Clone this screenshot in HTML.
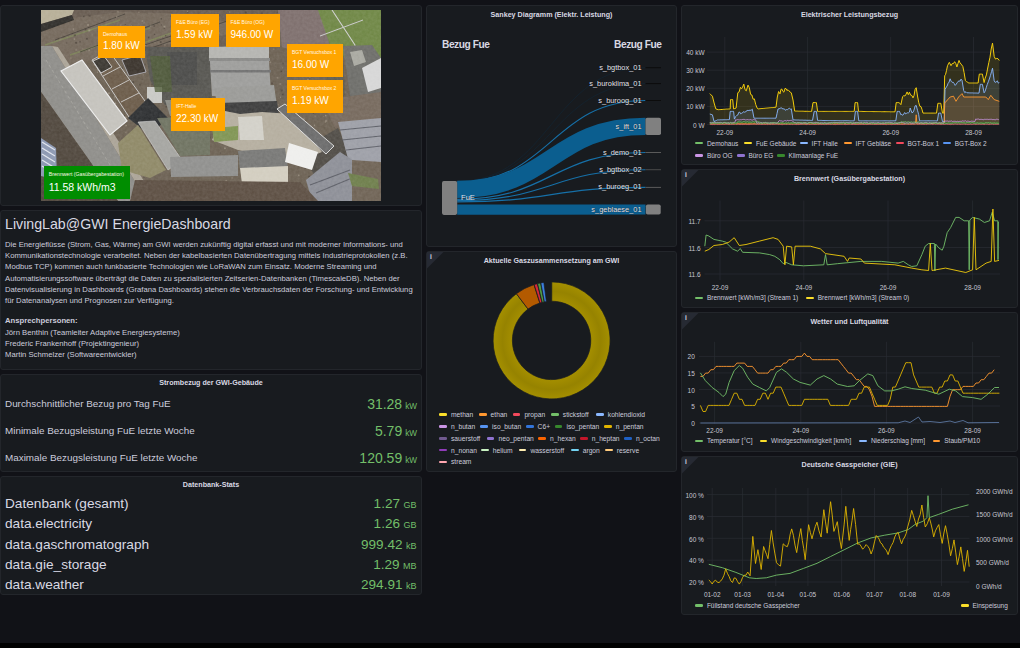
<!DOCTYPE html>
<html><head><meta charset="utf-8">
<style>
*{box-sizing:border-box;margin:0;padding:0}
html,body{width:1020px;height:648px;overflow:hidden;background:#111217;font-family:"Liberation Sans",sans-serif;color:#ccccdc}
.p{position:absolute;background:#181b1f;border:1px solid #23262b;border-radius:3px;overflow:hidden}
.t{position:absolute;white-space:nowrap}
.ttl{position:absolute;text-align:center;font-size:7.15px;line-height:8px;font-weight:bold;color:#d8d9e3;white-space:nowrap}
.ob{position:absolute;background:#ffa500;color:#fff;overflow:hidden}
.ol{position:absolute;left:5px;top:6px;font-size:5px;line-height:5px;white-space:nowrap;color:#fff8e8}
.ov{position:absolute;left:5px;top:14.5px;font-size:10px;line-height:12px;white-space:nowrap}
.sl{font-size:9.9px;line-height:12px;color:#ccccdc}
.sv{font-size:14px;line-height:16px;color:#73bf69}
.su{font-size:8.2px;margin-left:3px}
.dl{font-size:13.65px;line-height:15px;color:#d8d9e3}
.dv{font-size:13.55px;line-height:15px;color:#73bf69}
.du{font-size:9px;margin-left:3.5px}
#bar{position:absolute;left:0;top:643px;width:1020px;height:5px;background:#000}
</style><style>
.sk{font-size:7.4px;line-height:8px;color:#e6e6ee;text-shadow:0 0 1px #000}
.lg{font-size:6.7px;line-height:9px;color:#ccccdc;padding-left:11.8px}
.lg i,.lg2 i{position:absolute;left:0;top:3.2px;width:7.8px;height:2.6px;border-radius:1.3px}
.lg2{font-size:6.5px;line-height:9px;color:#ccccdc;padding-left:11.6px}
.ax{font-size:6.5px;line-height:8px;color:#c7c7d1;margin-top:1px}
</style></head><body>
<!-- left column -->
<div class="p" id="pA" style="left:0;top:5px;width:422px;height:201px"></div>
<div class="p" id="pB" style="left:0;top:210px;width:422px;height:160px"></div>
<div class="p" id="pC" style="left:0;top:374px;width:422px;height:98px"></div>
<div class="p" id="pD" style="left:0;top:476px;width:422px;height:119px"></div>
<!-- middle -->
<div class="p" id="pS" style="left:426px;top:5px;width:251px;height:242px"></div>
<div class="p" id="pP" style="left:426px;top:251px;width:251px;height:221px"></div>
<!-- right -->
<div class="p" id="pE" style="left:681px;top:5px;width:337px;height:160px"></div>
<div class="p" id="pW1" style="left:681px;top:169px;width:337px;height:139px"></div>
<div class="p" id="pW2" style="left:681px;top:312px;width:337px;height:140px"></div>
<div class="p" id="pG" style="left:681px;top:456px;width:337px;height:159px"></div>

<svg style="position:absolute;left:41px;top:10px" width="340" height="191" viewBox="41 10 340 191">
<defs>
<filter id="nz" x="0" y="0" width="100%" height="100%">
<feTurbulence type="fractalNoise" baseFrequency="0.35" numOctaves="2" seed="3" result="t"/>
<feColorMatrix in="t" type="matrix" values="0 0 0 0 0  0 0 0 0 0  0 0 0 0 0  0 0 0 -1.2 1.1" result="a"/>
<feComposite in="SourceGraphic" in2="a" operator="in"/>
</filter>
</defs>
<rect x="41" y="10" width="340" height="191" fill="#6b6052"/>
<!-- top tree band -->
<polygon points="41,10 282,10 275,47 210,47 148,47 120,56 88,60 41,82" fill="#675b50"/>
<polygon points="41,22 120,12 200,14 250,30 200,40 120,50 60,70 41,75" fill="#73675a"/>
<path d="M45,45 L120,20 M70,55 L150,28 M95,60 L180,30" fill="none" stroke="#7d8658" stroke-width="1.6" opacity="0.8"/>
<path d="M55,40 L125,14 M80,52 L160,22 M110,57 L200,26 M140,52 L230,20" fill="none" stroke="#3f3932" stroke-width="1" opacity="0.8"/>
<rect x="258.4" y="14.8" width="1.1" height="1.1" fill="#3a332c" opacity="0.55"/><rect x="88.4" y="29.6" width="1.9" height="1.9" fill="#b0a898" opacity="0.55"/><rect x="70.6" y="90.6" width="0.9" height="0.9" fill="#9a8e80" opacity="0.55"/><rect x="120.1" y="125.0" width="1.0" height="1.0" fill="#8a7e70" opacity="0.55"/><rect x="262.0" y="114.1" width="1.3" height="1.3" fill="#a89c8c" opacity="0.55"/><rect x="135.6" y="176.0" width="1.6" height="1.6" fill="#a89c8c" opacity="0.55"/><rect x="156.7" y="39.7" width="0.9" height="0.9" fill="#3a332c" opacity="0.55"/><rect x="170.2" y="78.6" width="1.5" height="1.5" fill="#3a332c" opacity="0.55"/><rect x="315.4" y="149.4" width="0.9" height="0.9" fill="#8a7e70" opacity="0.55"/><rect x="354.6" y="25.1" width="1.8" height="1.8" fill="#3a332c" opacity="0.55"/><rect x="251.3" y="174.6" width="1.0" height="1.0" fill="#8a7e70" opacity="0.55"/><rect x="64.6" y="136.3" width="2.0" height="2.0" fill="#3a332c" opacity="0.55"/><rect x="331.8" y="175.5" width="1.1" height="1.1" fill="#4a4038" opacity="0.55"/><rect x="257.1" y="79.7" width="1.2" height="1.2" fill="#3a332c" opacity="0.55"/><rect x="268.9" y="144.0" width="1.6" height="1.6" fill="#b0a898" opacity="0.55"/><rect x="248.1" y="42.7" width="1.1" height="1.1" fill="#b0a898" opacity="0.55"/><rect x="198.2" y="61.6" width="1.6" height="1.6" fill="#b0a898" opacity="0.55"/><rect x="115.7" y="71.9" width="1.1" height="1.1" fill="#9a8e80" opacity="0.55"/><rect x="51.9" y="70.3" width="0.9" height="0.9" fill="#3a332c" opacity="0.55"/><rect x="351.5" y="118.3" width="1.2" height="1.2" fill="#b0a898" opacity="0.55"/><rect x="263.8" y="85.6" width="1.4" height="1.4" fill="#b0a898" opacity="0.55"/><rect x="131.1" y="57.1" width="1.4" height="1.4" fill="#8a7e70" opacity="0.55"/><rect x="295.0" y="91.8" width="1.3" height="1.3" fill="#8a7e70" opacity="0.55"/><rect x="115.6" y="200.5" width="1.4" height="1.4" fill="#8a7e70" opacity="0.55"/><rect x="298.0" y="174.5" width="1.6" height="1.6" fill="#a89c8c" opacity="0.55"/><rect x="310.3" y="90.6" width="1.3" height="1.3" fill="#9a8e80" opacity="0.55"/><rect x="243.6" y="99.4" width="2.0" height="2.0" fill="#3a332c" opacity="0.55"/><rect x="333.7" y="12.2" width="0.9" height="0.9" fill="#b0a898" opacity="0.55"/><rect x="341.8" y="153.4" width="1.2" height="1.2" fill="#b0a898" opacity="0.55"/><rect x="140.8" y="40.2" width="1.9" height="1.9" fill="#9a8e80" opacity="0.55"/><rect x="338.8" y="60.3" width="1.7" height="1.7" fill="#8a7e70" opacity="0.55"/><rect x="213.6" y="30.3" width="1.2" height="1.2" fill="#b0a898" opacity="0.55"/><rect x="258.2" y="126.3" width="1.2" height="1.2" fill="#a89c8c" opacity="0.55"/><rect x="95.9" y="192.1" width="1.9" height="1.9" fill="#8a7e70" opacity="0.55"/><rect x="244.6" y="103.3" width="1.9" height="1.9" fill="#9a8e80" opacity="0.55"/><rect x="339.8" y="168.8" width="1.1" height="1.1" fill="#3a332c" opacity="0.55"/><rect x="122.9" y="118.4" width="0.9" height="0.9" fill="#9a8e80" opacity="0.55"/><rect x="206.2" y="23.2" width="1.7" height="1.7" fill="#8a7e70" opacity="0.55"/><rect x="84.7" y="100.8" width="1.0" height="1.0" fill="#8a7e70" opacity="0.55"/><rect x="220.4" y="125.9" width="1.9" height="1.9" fill="#a89c8c" opacity="0.55"/><rect x="297.8" y="141.8" width="1.2" height="1.2" fill="#b0a898" opacity="0.55"/><rect x="379.4" y="134.1" width="1.9" height="1.9" fill="#4a4038" opacity="0.55"/><rect x="194.5" y="57.3" width="1.2" height="1.2" fill="#9a8e80" opacity="0.55"/><rect x="241.0" y="54.0" width="0.8" height="0.8" fill="#a89c8c" opacity="0.55"/><rect x="281.7" y="21.2" width="1.9" height="1.9" fill="#9a8e80" opacity="0.55"/><rect x="333.3" y="23.5" width="1.1" height="1.1" fill="#a89c8c" opacity="0.55"/><rect x="206.0" y="113.0" width="1.9" height="1.9" fill="#b0a898" opacity="0.55"/><rect x="235.2" y="100.3" width="1.8" height="1.8" fill="#4a4038" opacity="0.55"/><rect x="105.7" y="28.5" width="1.2" height="1.2" fill="#4a4038" opacity="0.55"/><rect x="180.8" y="175.0" width="1.6" height="1.6" fill="#9a8e80" opacity="0.55"/><rect x="375.6" y="28.8" width="1.7" height="1.7" fill="#4a4038" opacity="0.55"/><rect x="313.2" y="30.9" width="1.0" height="1.0" fill="#a89c8c" opacity="0.55"/><rect x="193.5" y="90.6" width="1.4" height="1.4" fill="#3a332c" opacity="0.55"/><rect x="338.3" y="24.4" width="0.9" height="0.9" fill="#8a7e70" opacity="0.55"/><rect x="262.7" y="113.3" width="2.0" height="2.0" fill="#9a8e80" opacity="0.55"/><rect x="356.0" y="172.1" width="1.3" height="1.3" fill="#a89c8c" opacity="0.55"/><rect x="204.7" y="175.1" width="1.0" height="1.0" fill="#9a8e80" opacity="0.55"/><rect x="41.7" y="84.6" width="1.1" height="1.1" fill="#4a4038" opacity="0.55"/><rect x="277.8" y="149.5" width="1.6" height="1.6" fill="#8a7e70" opacity="0.55"/><rect x="206.5" y="46.3" width="2.0" height="2.0" fill="#a89c8c" opacity="0.55"/><rect x="237.9" y="113.6" width="1.2" height="1.2" fill="#b0a898" opacity="0.55"/><rect x="58.0" y="101.1" width="1.0" height="1.0" fill="#8a7e70" opacity="0.55"/><rect x="367.7" y="25.3" width="0.9" height="0.9" fill="#a89c8c" opacity="0.55"/><rect x="64.1" y="174.6" width="0.9" height="0.9" fill="#4a4038" opacity="0.55"/><rect x="343.7" y="57.0" width="0.8" height="0.8" fill="#8a7e70" opacity="0.55"/><rect x="68.9" y="135.6" width="1.4" height="1.4" fill="#8a7e70" opacity="0.55"/><rect x="358.8" y="49.0" width="1.2" height="1.2" fill="#b0a898" opacity="0.55"/><rect x="131.3" y="35.0" width="1.2" height="1.2" fill="#b0a898" opacity="0.55"/><rect x="148.5" y="153.6" width="0.8" height="0.8" fill="#9a8e80" opacity="0.55"/><rect x="252.2" y="117.5" width="0.9" height="0.9" fill="#9a8e80" opacity="0.55"/><rect x="113.5" y="60.7" width="1.9" height="1.9" fill="#3a332c" opacity="0.55"/><rect x="340.0" y="80.6" width="1.3" height="1.3" fill="#a89c8c" opacity="0.55"/><rect x="225.7" y="67.8" width="1.4" height="1.4" fill="#b0a898" opacity="0.55"/><rect x="268.1" y="115.9" width="0.9" height="0.9" fill="#b0a898" opacity="0.55"/><rect x="339.6" y="60.5" width="1.7" height="1.7" fill="#9a8e80" opacity="0.55"/><rect x="93.9" y="63.8" width="1.7" height="1.7" fill="#a89c8c" opacity="0.55"/><rect x="110.2" y="131.1" width="1.4" height="1.4" fill="#3a332c" opacity="0.55"/><rect x="126.4" y="183.5" width="0.9" height="0.9" fill="#9a8e80" opacity="0.55"/><rect x="185.0" y="62.8" width="1.2" height="1.2" fill="#9a8e80" opacity="0.55"/><rect x="85.5" y="197.1" width="1.7" height="1.7" fill="#a89c8c" opacity="0.55"/><rect x="228.6" y="91.7" width="0.9" height="0.9" fill="#9a8e80" opacity="0.55"/><rect x="362.3" y="142.0" width="1.5" height="1.5" fill="#a89c8c" opacity="0.55"/><rect x="324.8" y="121.3" width="1.3" height="1.3" fill="#a89c8c" opacity="0.55"/><rect x="55.2" y="79.6" width="1.9" height="1.9" fill="#9a8e80" opacity="0.55"/><rect x="112.4" y="57.7" width="1.2" height="1.2" fill="#9a8e80" opacity="0.55"/><rect x="231.4" y="177.1" width="1.7" height="1.7" fill="#8a7e70" opacity="0.55"/><rect x="355.8" y="55.2" width="2.0" height="2.0" fill="#a89c8c" opacity="0.55"/><rect x="316.7" y="178.4" width="1.0" height="1.0" fill="#9a8e80" opacity="0.55"/><rect x="355.3" y="159.4" width="1.8" height="1.8" fill="#4a4038" opacity="0.55"/><rect x="334.8" y="164.9" width="1.0" height="1.0" fill="#3a332c" opacity="0.55"/><rect x="279.4" y="83.1" width="1.8" height="1.8" fill="#9a8e80" opacity="0.55"/><rect x="116.6" y="166.0" width="1.2" height="1.2" fill="#4a4038" opacity="0.55"/><rect x="320.0" y="176.4" width="0.8" height="0.8" fill="#a89c8c" opacity="0.55"/><rect x="106.7" y="72.7" width="2.0" height="2.0" fill="#9a8e80" opacity="0.55"/><rect x="135.9" y="132.5" width="1.6" height="1.6" fill="#4a4038" opacity="0.55"/><rect x="327.8" y="73.2" width="0.9" height="0.9" fill="#9a8e80" opacity="0.55"/><rect x="370.9" y="44.1" width="0.8" height="0.8" fill="#3a332c" opacity="0.55"/><rect x="243.8" y="76.0" width="1.3" height="1.3" fill="#3a332c" opacity="0.55"/><rect x="375.6" y="32.1" width="1.0" height="1.0" fill="#8a7e70" opacity="0.55"/><rect x="56.1" y="93.3" width="1.9" height="1.9" fill="#8a7e70" opacity="0.55"/><rect x="224.1" y="147.4" width="1.7" height="1.7" fill="#b0a898" opacity="0.55"/><rect x="108.0" y="92.4" width="1.9" height="1.9" fill="#b0a898" opacity="0.55"/><rect x="252.9" y="136.7" width="1.7" height="1.7" fill="#9a8e80" opacity="0.55"/><rect x="143.1" y="69.1" width="1.2" height="1.2" fill="#4a4038" opacity="0.55"/><rect x="278.1" y="115.9" width="1.3" height="1.3" fill="#a89c8c" opacity="0.55"/><rect x="360.7" y="139.4" width="1.5" height="1.5" fill="#a89c8c" opacity="0.55"/><rect x="143.3" y="114.7" width="1.2" height="1.2" fill="#9a8e80" opacity="0.55"/><rect x="112.5" y="160.1" width="1.6" height="1.6" fill="#8a7e70" opacity="0.55"/><rect x="199.1" y="94.5" width="1.4" height="1.4" fill="#a89c8c" opacity="0.55"/><rect x="310.9" y="193.3" width="1.0" height="1.0" fill="#b0a898" opacity="0.55"/><rect x="69.8" y="108.5" width="1.5" height="1.5" fill="#b0a898" opacity="0.55"/><rect x="72.8" y="191.8" width="1.6" height="1.6" fill="#a89c8c" opacity="0.55"/><rect x="117.4" y="48.0" width="0.9" height="0.9" fill="#9a8e80" opacity="0.55"/><rect x="375.5" y="126.8" width="1.3" height="1.3" fill="#9a8e80" opacity="0.55"/><rect x="342.3" y="120.0" width="1.6" height="1.6" fill="#b0a898" opacity="0.55"/><rect x="209.1" y="56.6" width="1.6" height="1.6" fill="#b0a898" opacity="0.55"/><rect x="344.5" y="174.3" width="1.7" height="1.7" fill="#9a8e80" opacity="0.55"/><rect x="115.4" y="163.6" width="1.4" height="1.4" fill="#b0a898" opacity="0.55"/><rect x="58.1" y="57.6" width="1.3" height="1.3" fill="#9a8e80" opacity="0.55"/><rect x="313.5" y="137.5" width="1.5" height="1.5" fill="#8a7e70" opacity="0.55"/><rect x="364.0" y="180.3" width="1.8" height="1.8" fill="#8a7e70" opacity="0.55"/><rect x="344.3" y="91.5" width="1.3" height="1.3" fill="#8a7e70" opacity="0.55"/><rect x="95.1" y="174.5" width="1.1" height="1.1" fill="#4a4038" opacity="0.55"/><rect x="125.1" y="131.8" width="1.4" height="1.4" fill="#8a7e70" opacity="0.55"/><rect x="122.3" y="94.0" width="1.1" height="1.1" fill="#b0a898" opacity="0.55"/><rect x="133.4" y="71.1" width="0.9" height="0.9" fill="#8a7e70" opacity="0.55"/><rect x="92.3" y="83.2" width="1.6" height="1.6" fill="#a89c8c" opacity="0.55"/><rect x="62.8" y="87.9" width="1.4" height="1.4" fill="#8a7e70" opacity="0.55"/><rect x="62.2" y="169.1" width="1.9" height="1.9" fill="#4a4038" opacity="0.55"/><rect x="239.6" y="142.8" width="1.3" height="1.3" fill="#8a7e70" opacity="0.55"/><rect x="43.0" y="77.2" width="1.8" height="1.8" fill="#4a4038" opacity="0.55"/><rect x="365.2" y="90.0" width="1.7" height="1.7" fill="#b0a898" opacity="0.55"/><rect x="313.0" y="181.5" width="1.1" height="1.1" fill="#4a4038" opacity="0.55"/><rect x="189.2" y="15.5" width="1.6" height="1.6" fill="#3a332c" opacity="0.55"/><rect x="312.4" y="148.3" width="1.9" height="1.9" fill="#4a4038" opacity="0.55"/><rect x="374.4" y="112.0" width="1.5" height="1.5" fill="#4a4038" opacity="0.55"/><rect x="266.4" y="26.0" width="1.0" height="1.0" fill="#4a4038" opacity="0.55"/><rect x="198.0" y="19.6" width="1.2" height="1.2" fill="#4a4038" opacity="0.55"/><rect x="195.6" y="74.5" width="1.1" height="1.1" fill="#4a4038" opacity="0.55"/><rect x="364.4" y="90.5" width="1.4" height="1.4" fill="#9a8e80" opacity="0.55"/><rect x="295.7" y="19.9" width="1.1" height="1.1" fill="#3a332c" opacity="0.55"/><rect x="64.3" y="192.8" width="1.7" height="1.7" fill="#9a8e80" opacity="0.55"/><rect x="363.9" y="48.1" width="1.5" height="1.5" fill="#9a8e80" opacity="0.55"/><rect x="122.1" y="100.5" width="1.5" height="1.5" fill="#9a8e80" opacity="0.55"/><rect x="115.1" y="143.6" width="1.0" height="1.0" fill="#3a332c" opacity="0.55"/><rect x="247.5" y="152.9" width="1.7" height="1.7" fill="#9a8e80" opacity="0.55"/><rect x="96.7" y="69.4" width="0.8" height="0.8" fill="#8a7e70" opacity="0.55"/><rect x="147.1" y="139.4" width="1.3" height="1.3" fill="#4a4038" opacity="0.55"/><rect x="284.1" y="24.5" width="1.8" height="1.8" fill="#b0a898" opacity="0.55"/><rect x="123.6" y="143.2" width="1.8" height="1.8" fill="#3a332c" opacity="0.55"/><rect x="245.1" y="33.1" width="1.7" height="1.7" fill="#8a7e70" opacity="0.55"/><rect x="159.0" y="91.8" width="0.9" height="0.9" fill="#3a332c" opacity="0.55"/><rect x="261.2" y="12.4" width="1.8" height="1.8" fill="#4a4038" opacity="0.55"/><rect x="76.9" y="193.5" width="1.9" height="1.9" fill="#b0a898" opacity="0.55"/><rect x="197.3" y="39.2" width="1.7" height="1.7" fill="#a89c8c" opacity="0.55"/><rect x="369.3" y="61.6" width="1.7" height="1.7" fill="#8a7e70" opacity="0.55"/><rect x="199.1" y="167.7" width="1.1" height="1.1" fill="#8a7e70" opacity="0.55"/><rect x="330.6" y="168.7" width="1.1" height="1.1" fill="#9a8e80" opacity="0.55"/><rect x="194.3" y="153.3" width="1.5" height="1.5" fill="#8a7e70" opacity="0.55"/><rect x="169.9" y="15.5" width="1.0" height="1.0" fill="#3a332c" opacity="0.55"/><rect x="113.1" y="162.4" width="1.1" height="1.1" fill="#3a332c" opacity="0.55"/><rect x="243.7" y="178.1" width="0.8" height="0.8" fill="#8a7e70" opacity="0.55"/><rect x="363.3" y="26.4" width="1.3" height="1.3" fill="#b0a898" opacity="0.55"/><rect x="229.8" y="55.9" width="1.6" height="1.6" fill="#4a4038" opacity="0.55"/><rect x="207.9" y="161.5" width="1.2" height="1.2" fill="#9a8e80" opacity="0.55"/><rect x="178.5" y="56.5" width="1.5" height="1.5" fill="#b0a898" opacity="0.55"/><rect x="201.9" y="111.4" width="2.0" height="2.0" fill="#4a4038" opacity="0.55"/><rect x="228.1" y="77.2" width="1.1" height="1.1" fill="#4a4038" opacity="0.55"/><rect x="126.5" y="33.0" width="1.2" height="1.2" fill="#a89c8c" opacity="0.55"/><rect x="293.6" y="191.6" width="1.0" height="1.0" fill="#b0a898" opacity="0.55"/><rect x="114.6" y="102.5" width="1.5" height="1.5" fill="#b0a898" opacity="0.55"/><rect x="299.5" y="124.0" width="1.8" height="1.8" fill="#9a8e80" opacity="0.55"/><rect x="141.7" y="78.9" width="0.8" height="0.8" fill="#3a332c" opacity="0.55"/><rect x="222.6" y="62.4" width="1.5" height="1.5" fill="#9a8e80" opacity="0.55"/><rect x="278.1" y="34.1" width="0.9" height="0.9" fill="#4a4038" opacity="0.55"/><rect x="45.2" y="64.3" width="1.3" height="1.3" fill="#4a4038" opacity="0.55"/><rect x="103.7" y="19.8" width="0.9" height="0.9" fill="#4a4038" opacity="0.55"/><rect x="63.2" y="103.9" width="1.6" height="1.6" fill="#8a7e70" opacity="0.55"/><rect x="59.2" y="38.5" width="1.9" height="1.9" fill="#8a7e70" opacity="0.55"/><rect x="70.0" y="57.4" width="1.7" height="1.7" fill="#8a7e70" opacity="0.55"/><rect x="247.1" y="161.0" width="1.7" height="1.7" fill="#a89c8c" opacity="0.55"/><rect x="170.3" y="183.5" width="1.8" height="1.8" fill="#3a332c" opacity="0.55"/><rect x="377.6" y="68.3" width="0.9" height="0.9" fill="#8a7e70" opacity="0.55"/><rect x="367.4" y="29.0" width="1.6" height="1.6" fill="#a89c8c" opacity="0.55"/><rect x="131.0" y="25.5" width="1.0" height="1.0" fill="#a89c8c" opacity="0.55"/><rect x="66.5" y="10.5" width="1.6" height="1.6" fill="#4a4038" opacity="0.55"/><rect x="200.8" y="16.2" width="1.6" height="1.6" fill="#3a332c" opacity="0.55"/><rect x="280.0" y="96.7" width="1.1" height="1.1" fill="#b0a898" opacity="0.55"/><rect x="130.9" y="161.1" width="1.6" height="1.6" fill="#8a7e70" opacity="0.55"/><rect x="358.4" y="91.2" width="1.1" height="1.1" fill="#8a7e70" opacity="0.55"/><rect x="91.7" y="60.7" width="0.9" height="0.9" fill="#a89c8c" opacity="0.55"/><rect x="97.4" y="68.8" width="1.8" height="1.8" fill="#b0a898" opacity="0.55"/><rect x="354.2" y="93.9" width="1.6" height="1.6" fill="#4a4038" opacity="0.55"/><rect x="278.9" y="190.1" width="1.4" height="1.4" fill="#8a7e70" opacity="0.55"/><rect x="189.8" y="124.2" width="1.7" height="1.7" fill="#4a4038" opacity="0.55"/><rect x="246.3" y="14.9" width="2.0" height="2.0" fill="#a89c8c" opacity="0.55"/><rect x="325.2" y="119.9" width="2.0" height="2.0" fill="#9a8e80" opacity="0.55"/><rect x="269.6" y="61.5" width="1.7" height="1.7" fill="#9a8e80" opacity="0.55"/><rect x="100.6" y="109.1" width="1.9" height="1.9" fill="#4a4038" opacity="0.55"/><rect x="102.7" y="121.8" width="1.8" height="1.8" fill="#b0a898" opacity="0.55"/><rect x="370.5" y="99.8" width="1.2" height="1.2" fill="#4a4038" opacity="0.55"/><rect x="268.8" y="173.8" width="1.3" height="1.3" fill="#3a332c" opacity="0.55"/><rect x="209.5" y="136.6" width="1.8" height="1.8" fill="#4a4038" opacity="0.55"/><rect x="228.0" y="96.9" width="1.1" height="1.1" fill="#3a332c" opacity="0.55"/><rect x="80.4" y="157.6" width="1.8" height="1.8" fill="#8a7e70" opacity="0.55"/><rect x="41.4" y="176.0" width="1.3" height="1.3" fill="#4a4038" opacity="0.55"/><rect x="104.8" y="79.1" width="1.6" height="1.6" fill="#4a4038" opacity="0.55"/><rect x="299.4" y="48.9" width="1.0" height="1.0" fill="#8a7e70" opacity="0.55"/><rect x="138.9" y="178.2" width="0.9" height="0.9" fill="#4a4038" opacity="0.55"/><rect x="371.9" y="126.3" width="1.7" height="1.7" fill="#a89c8c" opacity="0.55"/><rect x="146.7" y="12.6" width="0.9" height="0.9" fill="#4a4038" opacity="0.55"/><rect x="378.4" y="184.4" width="1.9" height="1.9" fill="#4a4038" opacity="0.55"/><rect x="261.2" y="39.4" width="1.2" height="1.2" fill="#b0a898" opacity="0.55"/><rect x="280.8" y="89.4" width="2.0" height="2.0" fill="#4a4038" opacity="0.55"/><rect x="123.9" y="115.3" width="1.0" height="1.0" fill="#4a4038" opacity="0.55"/><rect x="244.8" y="152.5" width="1.8" height="1.8" fill="#a89c8c" opacity="0.55"/><rect x="134.9" y="160.9" width="1.2" height="1.2" fill="#4a4038" opacity="0.55"/><rect x="308.8" y="61.0" width="1.1" height="1.1" fill="#9a8e80" opacity="0.55"/><rect x="142.5" y="122.1" width="1.4" height="1.4" fill="#b0a898" opacity="0.55"/><rect x="91.5" y="112.9" width="1.2" height="1.2" fill="#3a332c" opacity="0.55"/><rect x="300.4" y="82.0" width="1.8" height="1.8" fill="#3a332c" opacity="0.55"/><rect x="374.5" y="55.6" width="1.1" height="1.1" fill="#4a4038" opacity="0.55"/><rect x="304.7" y="18.3" width="1.4" height="1.4" fill="#b0a898" opacity="0.55"/><rect x="351.6" y="82.8" width="1.8" height="1.8" fill="#b0a898" opacity="0.55"/><rect x="262.7" y="39.1" width="1.0" height="1.0" fill="#9a8e80" opacity="0.55"/><rect x="369.2" y="73.4" width="1.8" height="1.8" fill="#9a8e80" opacity="0.55"/><rect x="190.7" y="110.5" width="0.8" height="0.8" fill="#4a4038" opacity="0.55"/><rect x="90.0" y="176.3" width="0.9" height="0.9" fill="#a89c8c" opacity="0.55"/><rect x="306.7" y="60.6" width="1.6" height="1.6" fill="#8a7e70" opacity="0.55"/><rect x="261.9" y="172.7" width="1.8" height="1.8" fill="#b0a898" opacity="0.55"/><rect x="170.2" y="70.5" width="1.9" height="1.9" fill="#b0a898" opacity="0.55"/><rect x="206.9" y="113.3" width="0.9" height="0.9" fill="#8a7e70" opacity="0.55"/><rect x="255.6" y="185.9" width="1.7" height="1.7" fill="#a89c8c" opacity="0.55"/><rect x="188.6" y="28.8" width="1.6" height="1.6" fill="#b0a898" opacity="0.55"/><rect x="75.2" y="41.8" width="1.9" height="1.9" fill="#3a332c" opacity="0.55"/><rect x="56.6" y="162.1" width="1.2" height="1.2" fill="#3a332c" opacity="0.55"/><rect x="187.4" y="56.6" width="1.5" height="1.5" fill="#4a4038" opacity="0.55"/><rect x="310.5" y="42.5" width="1.5" height="1.5" fill="#9a8e80" opacity="0.55"/><rect x="171.1" y="140.5" width="1.9" height="1.9" fill="#4a4038" opacity="0.55"/><rect x="89.7" y="98.1" width="1.4" height="1.4" fill="#3a332c" opacity="0.55"/><rect x="267.7" y="181.7" width="1.9" height="1.9" fill="#4a4038" opacity="0.55"/><rect x="271.4" y="40.2" width="1.9" height="1.9" fill="#4a4038" opacity="0.55"/><rect x="376.8" y="67.1" width="1.6" height="1.6" fill="#4a4038" opacity="0.55"/><rect x="196.3" y="67.7" width="1.8" height="1.8" fill="#4a4038" opacity="0.55"/><rect x="77.3" y="82.8" width="1.5" height="1.5" fill="#3a332c" opacity="0.55"/><rect x="378.5" y="66.4" width="1.3" height="1.3" fill="#b0a898" opacity="0.55"/><rect x="43.8" y="175.2" width="2.0" height="2.0" fill="#b0a898" opacity="0.55"/><rect x="350.6" y="152.3" width="1.7" height="1.7" fill="#3a332c" opacity="0.55"/><rect x="119.2" y="163.2" width="1.6" height="1.6" fill="#a89c8c" opacity="0.55"/><rect x="252.1" y="139.5" width="1.7" height="1.7" fill="#b0a898" opacity="0.55"/><rect x="272.5" y="36.1" width="1.9" height="1.9" fill="#9a8e80" opacity="0.55"/><rect x="260.8" y="69.0" width="0.8" height="0.8" fill="#4a4038" opacity="0.55"/><rect x="165.1" y="35.1" width="1.2" height="1.2" fill="#3a332c" opacity="0.55"/><rect x="182.3" y="48.4" width="1.9" height="1.9" fill="#8a7e70" opacity="0.55"/><rect x="165.4" y="105.8" width="1.8" height="1.8" fill="#3a332c" opacity="0.55"/><rect x="128.4" y="167.5" width="2.0" height="2.0" fill="#4a4038" opacity="0.55"/><rect x="141.3" y="176.2" width="1.4" height="1.4" fill="#9a8e80" opacity="0.55"/><rect x="66.6" y="154.0" width="1.8" height="1.8" fill="#a89c8c" opacity="0.55"/><rect x="287.2" y="197.2" width="1.2" height="1.2" fill="#8a7e70" opacity="0.55"/><rect x="309.8" y="12.7" width="0.9" height="0.9" fill="#8a7e70" opacity="0.55"/><rect x="166.3" y="153.1" width="1.5" height="1.5" fill="#3a332c" opacity="0.55"/><rect x="320.6" y="189.6" width="1.6" height="1.6" fill="#9a8e80" opacity="0.55"/><rect x="201.3" y="128.3" width="1.2" height="1.2" fill="#8a7e70" opacity="0.55"/><rect x="248.4" y="133.7" width="1.8" height="1.8" fill="#b0a898" opacity="0.55"/><rect x="350.2" y="67.7" width="0.9" height="0.9" fill="#4a4038" opacity="0.55"/><rect x="56.4" y="17.1" width="0.9" height="0.9" fill="#4a4038" opacity="0.55"/><rect x="120.8" y="112.7" width="1.3" height="1.3" fill="#4a4038" opacity="0.55"/><rect x="269.0" y="151.9" width="1.3" height="1.3" fill="#8a7e70" opacity="0.55"/><rect x="293.4" y="39.5" width="1.6" height="1.6" fill="#4a4038" opacity="0.55"/><rect x="324.5" y="127.6" width="0.8" height="0.8" fill="#3a332c" opacity="0.55"/><rect x="167.0" y="94.7" width="1.8" height="1.8" fill="#a89c8c" opacity="0.55"/><rect x="74.8" y="141.0" width="1.9" height="1.9" fill="#8a7e70" opacity="0.55"/><rect x="260.2" y="21.6" width="1.0" height="1.0" fill="#3a332c" opacity="0.55"/><rect x="82.5" y="172.0" width="0.9" height="0.9" fill="#4a4038" opacity="0.55"/><rect x="113.1" y="132.1" width="0.9" height="0.9" fill="#9a8e80" opacity="0.55"/><rect x="154.4" y="198.9" width="1.0" height="1.0" fill="#8a7e70" opacity="0.55"/><rect x="323.1" y="115.9" width="1.1" height="1.1" fill="#8a7e70" opacity="0.55"/><rect x="336.7" y="72.8" width="1.7" height="1.7" fill="#a89c8c" opacity="0.55"/><rect x="243.6" y="63.0" width="2.0" height="2.0" fill="#a89c8c" opacity="0.55"/><rect x="224.7" y="162.5" width="1.6" height="1.6" fill="#9a8e80" opacity="0.55"/><rect x="49.8" y="12.8" width="1.5" height="1.5" fill="#a89c8c" opacity="0.55"/><rect x="46.4" y="60.7" width="1.7" height="1.7" fill="#a89c8c" opacity="0.55"/><rect x="219.9" y="152.4" width="1.3" height="1.3" fill="#4a4038" opacity="0.55"/><rect x="164.1" y="123.4" width="1.4" height="1.4" fill="#4a4038" opacity="0.55"/><rect x="362.4" y="18.3" width="1.4" height="1.4" fill="#b0a898" opacity="0.55"/><rect x="196.7" y="194.1" width="2.0" height="2.0" fill="#9a8e80" opacity="0.55"/><rect x="329.1" y="91.4" width="1.4" height="1.4" fill="#9a8e80" opacity="0.55"/><rect x="350.3" y="24.0" width="1.2" height="1.2" fill="#9a8e80" opacity="0.55"/><rect x="91.4" y="34.1" width="1.6" height="1.6" fill="#8a7e70" opacity="0.55"/><rect x="227.4" y="72.1" width="1.4" height="1.4" fill="#8a7e70" opacity="0.55"/><rect x="195.3" y="125.6" width="1.8" height="1.8" fill="#9a8e80" opacity="0.55"/><rect x="79.9" y="135.1" width="1.7" height="1.7" fill="#8a7e70" opacity="0.55"/><rect x="114.1" y="96.2" width="1.3" height="1.3" fill="#a89c8c" opacity="0.55"/><rect x="322.3" y="86.2" width="0.9" height="0.9" fill="#b0a898" opacity="0.55"/><rect x="186.1" y="137.0" width="1.9" height="1.9" fill="#3a332c" opacity="0.55"/><rect x="274.5" y="100.6" width="1.8" height="1.8" fill="#9a8e80" opacity="0.55"/><rect x="72.7" y="28.4" width="1.2" height="1.2" fill="#b0a898" opacity="0.55"/><rect x="85.2" y="21.5" width="1.5" height="1.5" fill="#8a7e70" opacity="0.55"/><rect x="268.8" y="88.5" width="1.9" height="1.9" fill="#b0a898" opacity="0.55"/><rect x="184.8" y="184.9" width="2.0" height="2.0" fill="#9a8e80" opacity="0.55"/><rect x="245.1" y="77.2" width="1.4" height="1.4" fill="#8a7e70" opacity="0.55"/><rect x="93.6" y="102.1" width="1.2" height="1.2" fill="#9a8e80" opacity="0.55"/><rect x="230.1" y="31.9" width="1.5" height="1.5" fill="#3a332c" opacity="0.55"/><rect x="315.5" y="171.4" width="1.5" height="1.5" fill="#8a7e70" opacity="0.55"/><rect x="259.5" y="15.0" width="1.8" height="1.8" fill="#b0a898" opacity="0.55"/><rect x="131.9" y="44.5" width="1.7" height="1.7" fill="#b0a898" opacity="0.55"/><rect x="354.3" y="77.0" width="1.8" height="1.8" fill="#a89c8c" opacity="0.55"/><rect x="233.5" y="86.5" width="1.7" height="1.7" fill="#a89c8c" opacity="0.55"/><rect x="371.4" y="27.5" width="1.1" height="1.1" fill="#8a7e70" opacity="0.55"/><rect x="183.7" y="75.1" width="1.2" height="1.2" fill="#3a332c" opacity="0.55"/><rect x="151.3" y="189.8" width="0.9" height="0.9" fill="#8a7e70" opacity="0.55"/><rect x="58.9" y="40.1" width="0.9" height="0.9" fill="#8a7e70" opacity="0.55"/><rect x="68.7" y="94.6" width="1.4" height="1.4" fill="#4a4038" opacity="0.55"/><rect x="191.3" y="62.2" width="0.9" height="0.9" fill="#8a7e70" opacity="0.55"/><rect x="187.2" y="64.1" width="1.5" height="1.5" fill="#b0a898" opacity="0.55"/><rect x="220.2" y="68.9" width="1.3" height="1.3" fill="#a89c8c" opacity="0.55"/><rect x="244.8" y="11.5" width="1.9" height="1.9" fill="#3a332c" opacity="0.55"/><rect x="301.9" y="156.0" width="1.2" height="1.2" fill="#3a332c" opacity="0.55"/><rect x="43.6" y="152.7" width="1.0" height="1.0" fill="#a89c8c" opacity="0.55"/><rect x="222.1" y="54.0" width="1.8" height="1.8" fill="#8a7e70" opacity="0.55"/><rect x="315.1" y="23.8" width="0.9" height="0.9" fill="#b0a898" opacity="0.55"/><rect x="47.4" y="185.9" width="1.5" height="1.5" fill="#3a332c" opacity="0.55"/><rect x="236.0" y="145.5" width="1.1" height="1.1" fill="#4a4038" opacity="0.55"/><rect x="178.7" y="194.5" width="1.8" height="1.8" fill="#a89c8c" opacity="0.55"/><rect x="251.2" y="168.9" width="0.9" height="0.9" fill="#3a332c" opacity="0.55"/><rect x="328.1" y="56.5" width="1.3" height="1.3" fill="#8a7e70" opacity="0.55"/><rect x="67.7" y="176.3" width="1.2" height="1.2" fill="#b0a898" opacity="0.55"/><rect x="154.2" y="42.1" width="1.6" height="1.6" fill="#8a7e70" opacity="0.55"/><rect x="221.4" y="47.0" width="1.2" height="1.2" fill="#3a332c" opacity="0.55"/><rect x="366.8" y="133.3" width="1.1" height="1.1" fill="#a89c8c" opacity="0.55"/><rect x="90.8" y="47.7" width="1.0" height="1.0" fill="#8a7e70" opacity="0.55"/><rect x="299.1" y="24.4" width="1.4" height="1.4" fill="#b0a898" opacity="0.55"/><rect x="297.5" y="155.1" width="1.6" height="1.6" fill="#4a4038" opacity="0.55"/><rect x="340.9" y="132.8" width="1.2" height="1.2" fill="#8a7e70" opacity="0.55"/><rect x="371.1" y="70.4" width="0.9" height="0.9" fill="#4a4038" opacity="0.55"/><rect x="191.4" y="67.8" width="1.5" height="1.5" fill="#3a332c" opacity="0.55"/><rect x="160.7" y="24.2" width="1.3" height="1.3" fill="#4a4038" opacity="0.55"/><rect x="60.3" y="168.9" width="1.6" height="1.6" fill="#9a8e80" opacity="0.55"/><rect x="373.3" y="27.2" width="1.4" height="1.4" fill="#8a7e70" opacity="0.55"/><rect x="198.3" y="115.9" width="1.9" height="1.9" fill="#b0a898" opacity="0.55"/><rect x="193.9" y="164.7" width="1.0" height="1.0" fill="#b0a898" opacity="0.55"/><rect x="246.7" y="105.8" width="1.3" height="1.3" fill="#9a8e80" opacity="0.55"/><rect x="316.7" y="169.9" width="0.9" height="0.9" fill="#b0a898" opacity="0.55"/><rect x="260.7" y="17.5" width="1.3" height="1.3" fill="#b0a898" opacity="0.55"/><rect x="190.4" y="109.8" width="1.2" height="1.2" fill="#a89c8c" opacity="0.55"/><rect x="353.1" y="84.0" width="1.6" height="1.6" fill="#3a332c" opacity="0.55"/><rect x="58.8" y="130.5" width="0.9" height="0.9" fill="#3a332c" opacity="0.55"/><rect x="73.1" y="139.6" width="1.1" height="1.1" fill="#3a332c" opacity="0.55"/><rect x="330.5" y="194.2" width="1.8" height="1.8" fill="#8a7e70" opacity="0.55"/><rect x="154.3" y="121.3" width="1.9" height="1.9" fill="#a89c8c" opacity="0.55"/><rect x="146.5" y="135.3" width="1.3" height="1.3" fill="#b0a898" opacity="0.55"/><rect x="243.3" y="189.2" width="1.5" height="1.5" fill="#3a332c" opacity="0.55"/><rect x="259.8" y="72.7" width="1.6" height="1.6" fill="#a89c8c" opacity="0.55"/><rect x="322.8" y="151.1" width="1.9" height="1.9" fill="#b0a898" opacity="0.55"/><rect x="72.8" y="138.1" width="1.2" height="1.2" fill="#8a7e70" opacity="0.55"/><rect x="164.3" y="44.4" width="1.2" height="1.2" fill="#a89c8c" opacity="0.55"/><rect x="301.5" y="46.7" width="1.0" height="1.0" fill="#a89c8c" opacity="0.55"/><rect x="141.6" y="160.5" width="1.7" height="1.7" fill="#8a7e70" opacity="0.55"/><rect x="324.9" y="178.8" width="1.6" height="1.6" fill="#9a8e80" opacity="0.55"/><rect x="339.0" y="128.0" width="1.3" height="1.3" fill="#8a7e70" opacity="0.55"/><rect x="96.2" y="168.8" width="1.8" height="1.8" fill="#8a7e70" opacity="0.55"/><rect x="97.3" y="93.6" width="1.2" height="1.2" fill="#4a4038" opacity="0.55"/><rect x="285.7" y="195.2" width="1.1" height="1.1" fill="#8a7e70" opacity="0.55"/><rect x="295.5" y="95.7" width="1.1" height="1.1" fill="#8a7e70" opacity="0.55"/><rect x="369.3" y="159.8" width="1.2" height="1.2" fill="#a89c8c" opacity="0.55"/><rect x="363.0" y="198.0" width="1.7" height="1.7" fill="#4a4038" opacity="0.55"/><rect x="305.6" y="106.1" width="2.0" height="2.0" fill="#4a4038" opacity="0.55"/><rect x="318.7" y="163.0" width="1.8" height="1.8" fill="#a89c8c" opacity="0.55"/><rect x="58.7" y="101.8" width="1.5" height="1.5" fill="#3a332c" opacity="0.55"/><rect x="75.9" y="171.6" width="1.1" height="1.1" fill="#9a8e80" opacity="0.55"/><rect x="300.5" y="62.1" width="1.0" height="1.0" fill="#8a7e70" opacity="0.55"/><rect x="189.7" y="190.8" width="1.8" height="1.8" fill="#a89c8c" opacity="0.55"/><rect x="341.8" y="187.7" width="0.9" height="0.9" fill="#4a4038" opacity="0.55"/><rect x="211.7" y="55.0" width="1.2" height="1.2" fill="#9a8e80" opacity="0.55"/><rect x="50.6" y="187.8" width="1.6" height="1.6" fill="#b0a898" opacity="0.55"/><rect x="310.1" y="36.3" width="1.9" height="1.9" fill="#3a332c" opacity="0.55"/><rect x="201.6" y="168.7" width="1.4" height="1.4" fill="#b0a898" opacity="0.55"/><rect x="250.2" y="183.0" width="1.1" height="1.1" fill="#9a8e80" opacity="0.55"/><rect x="324.9" y="114.8" width="1.5" height="1.5" fill="#b0a898" opacity="0.55"/><rect x="184.9" y="158.2" width="1.2" height="1.2" fill="#a89c8c" opacity="0.55"/><rect x="57.2" y="90.2" width="1.3" height="1.3" fill="#8a7e70" opacity="0.55"/><rect x="78.7" y="182.9" width="1.4" height="1.4" fill="#8a7e70" opacity="0.55"/><rect x="255.9" y="119.8" width="1.0" height="1.0" fill="#b0a898" opacity="0.55"/><rect x="186.9" y="127.4" width="1.5" height="1.5" fill="#a89c8c" opacity="0.55"/><rect x="104.7" y="137.6" width="2.0" height="2.0" fill="#8a7e70" opacity="0.55"/><rect x="64.0" y="110.5" width="1.7" height="1.7" fill="#8a7e70" opacity="0.55"/><rect x="213.6" y="13.9" width="0.9" height="0.9" fill="#4a4038" opacity="0.55"/><rect x="172.5" y="81.3" width="0.8" height="0.8" fill="#b0a898" opacity="0.55"/><rect x="309.1" y="75.9" width="1.6" height="1.6" fill="#b0a898" opacity="0.55"/><rect x="76.2" y="121.1" width="1.0" height="1.0" fill="#3a332c" opacity="0.55"/><rect x="160.8" y="74.7" width="1.0" height="1.0" fill="#b0a898" opacity="0.55"/><rect x="305.9" y="98.7" width="1.4" height="1.4" fill="#b0a898" opacity="0.55"/><rect x="103.0" y="35.8" width="1.7" height="1.7" fill="#b0a898" opacity="0.55"/><rect x="196.6" y="66.0" width="1.7" height="1.7" fill="#9a8e80" opacity="0.55"/><rect x="342.2" y="70.3" width="1.4" height="1.4" fill="#3a332c" opacity="0.55"/><rect x="377.3" y="113.7" width="0.8" height="0.8" fill="#3a332c" opacity="0.55"/><rect x="260.9" y="64.6" width="1.8" height="1.8" fill="#9a8e80" opacity="0.55"/><rect x="153.9" y="33.8" width="1.3" height="1.3" fill="#3a332c" opacity="0.55"/><rect x="177.0" y="94.0" width="1.2" height="1.2" fill="#4a4038" opacity="0.55"/><rect x="104.5" y="142.2" width="1.9" height="1.9" fill="#3a332c" opacity="0.55"/><rect x="217.6" y="163.0" width="1.3" height="1.3" fill="#b0a898" opacity="0.55"/><rect x="187.4" y="200.1" width="1.5" height="1.5" fill="#a89c8c" opacity="0.55"/><rect x="150.2" y="25.3" width="1.2" height="1.2" fill="#b0a898" opacity="0.55"/><rect x="192.6" y="147.1" width="1.6" height="1.6" fill="#a89c8c" opacity="0.55"/><rect x="160.5" y="18.1" width="1.5" height="1.5" fill="#3a332c" opacity="0.55"/><rect x="188.9" y="132.1" width="0.9" height="0.9" fill="#9a8e80" opacity="0.55"/><rect x="257.8" y="79.4" width="1.6" height="1.6" fill="#b0a898" opacity="0.55"/><rect x="364.9" y="37.3" width="1.6" height="1.6" fill="#8a7e70" opacity="0.55"/><rect x="190.0" y="34.1" width="1.7" height="1.7" fill="#a89c8c" opacity="0.55"/><rect x="165.6" y="83.1" width="0.8" height="0.8" fill="#8a7e70" opacity="0.55"/><rect x="93.2" y="95.9" width="1.2" height="1.2" fill="#3a332c" opacity="0.55"/><rect x="300.4" y="119.6" width="1.2" height="1.2" fill="#8a7e70" opacity="0.55"/><rect x="147.9" y="63.2" width="0.8" height="0.8" fill="#9a8e80" opacity="0.55"/><rect x="104.3" y="108.9" width="0.9" height="0.9" fill="#8a7e70" opacity="0.55"/><rect x="304.5" y="144.5" width="2.0" height="2.0" fill="#a89c8c" opacity="0.55"/><rect x="138.1" y="185.0" width="1.0" height="1.0" fill="#4a4038" opacity="0.55"/><rect x="87.1" y="24.1" width="1.9" height="1.9" fill="#a89c8c" opacity="0.55"/><rect x="192.3" y="26.8" width="2.0" height="2.0" fill="#b0a898" opacity="0.55"/><rect x="376.4" y="137.6" width="0.9" height="0.9" fill="#b0a898" opacity="0.55"/><rect x="225.3" y="180.2" width="1.7" height="1.7" fill="#a89c8c" opacity="0.55"/><rect x="356.3" y="131.8" width="1.4" height="1.4" fill="#3a332c" opacity="0.55"/><rect x="82.3" y="48.4" width="1.1" height="1.1" fill="#a89c8c" opacity="0.55"/><rect x="209.0" y="78.9" width="1.2" height="1.2" fill="#8a7e70" opacity="0.55"/><rect x="314.2" y="115.4" width="1.9" height="1.9" fill="#8a7e70" opacity="0.55"/><rect x="63.4" y="86.0" width="1.7" height="1.7" fill="#b0a898" opacity="0.55"/><rect x="219.7" y="156.9" width="0.9" height="0.9" fill="#8a7e70" opacity="0.55"/><rect x="371.6" y="132.7" width="1.4" height="1.4" fill="#4a4038" opacity="0.55"/><rect x="216.9" y="34.5" width="1.6" height="1.6" fill="#8a7e70" opacity="0.55"/><rect x="102.9" y="194.6" width="1.4" height="1.4" fill="#4a4038" opacity="0.55"/><rect x="336.2" y="168.8" width="1.0" height="1.0" fill="#8a7e70" opacity="0.55"/><rect x="97.0" y="71.6" width="1.1" height="1.1" fill="#b0a898" opacity="0.55"/><rect x="363.1" y="109.1" width="1.8" height="1.8" fill="#3a332c" opacity="0.55"/><rect x="126.2" y="131.3" width="1.1" height="1.1" fill="#8a7e70" opacity="0.55"/><rect x="253.5" y="127.4" width="1.4" height="1.4" fill="#9a8e80" opacity="0.55"/><rect x="98.3" y="189.8" width="1.0" height="1.0" fill="#a89c8c" opacity="0.55"/><rect x="253.3" y="182.3" width="1.8" height="1.8" fill="#3a332c" opacity="0.55"/><rect x="232.6" y="167.6" width="0.9" height="0.9" fill="#9a8e80" opacity="0.55"/><rect x="363.5" y="157.3" width="1.6" height="1.6" fill="#3a332c" opacity="0.55"/><rect x="301.8" y="89.6" width="0.8" height="0.8" fill="#b0a898" opacity="0.55"/><rect x="343.3" y="114.2" width="1.9" height="1.9" fill="#b0a898" opacity="0.55"/><rect x="205.2" y="163.7" width="1.3" height="1.3" fill="#b0a898" opacity="0.55"/><rect x="195.2" y="141.5" width="1.3" height="1.3" fill="#a89c8c" opacity="0.55"/><rect x="205.6" y="49.0" width="1.0" height="1.0" fill="#8a7e70" opacity="0.55"/><rect x="333.9" y="71.0" width="2.0" height="2.0" fill="#3a332c" opacity="0.55"/><rect x="85.5" y="80.8" width="0.9" height="0.9" fill="#8a7e70" opacity="0.55"/><rect x="123.2" y="33.4" width="1.1" height="1.1" fill="#4a4038" opacity="0.55"/><rect x="73.9" y="65.4" width="1.8" height="1.8" fill="#4a4038" opacity="0.55"/><rect x="183.2" y="193.9" width="1.8" height="1.8" fill="#a89c8c" opacity="0.55"/><rect x="358.5" y="147.7" width="1.7" height="1.7" fill="#a89c8c" opacity="0.55"/><rect x="210.4" y="108.3" width="1.9" height="1.9" fill="#4a4038" opacity="0.55"/><rect x="210.1" y="27.2" width="1.4" height="1.4" fill="#4a4038" opacity="0.55"/><rect x="369.7" y="51.1" width="0.9" height="0.9" fill="#3a332c" opacity="0.55"/><rect x="136.7" y="124.1" width="1.6" height="1.6" fill="#b0a898" opacity="0.55"/><rect x="138.2" y="11.6" width="1.3" height="1.3" fill="#9a8e80" opacity="0.55"/><rect x="341.0" y="149.0" width="1.2" height="1.2" fill="#4a4038" opacity="0.55"/><rect x="177.2" y="118.9" width="1.2" height="1.2" fill="#a89c8c" opacity="0.55"/><rect x="139.1" y="83.8" width="1.7" height="1.7" fill="#4a4038" opacity="0.55"/><rect x="136.1" y="198.9" width="1.5" height="1.5" fill="#b0a898" opacity="0.55"/><rect x="84.7" y="28.5" width="1.8" height="1.8" fill="#3a332c" opacity="0.55"/><rect x="156.3" y="189.3" width="1.0" height="1.0" fill="#a89c8c" opacity="0.55"/><rect x="214.1" y="105.5" width="0.8" height="0.8" fill="#9a8e80" opacity="0.55"/><rect x="283.6" y="163.6" width="1.3" height="1.3" fill="#8a7e70" opacity="0.55"/><rect x="247.1" y="108.5" width="1.9" height="1.9" fill="#3a332c" opacity="0.55"/><rect x="149.3" y="85.1" width="1.7" height="1.7" fill="#8a7e70" opacity="0.55"/><rect x="142.7" y="74.2" width="1.4" height="1.4" fill="#8a7e70" opacity="0.55"/><rect x="282.0" y="67.3" width="1.2" height="1.2" fill="#9a8e80" opacity="0.55"/><rect x="270.1" y="197.2" width="1.2" height="1.2" fill="#8a7e70" opacity="0.55"/><rect x="346.6" y="176.6" width="0.8" height="0.8" fill="#b0a898" opacity="0.55"/><rect x="202.4" y="194.7" width="1.5" height="1.5" fill="#8a7e70" opacity="0.55"/><rect x="286.3" y="121.5" width="1.4" height="1.4" fill="#a89c8c" opacity="0.55"/><rect x="286.2" y="157.9" width="1.0" height="1.0" fill="#4a4038" opacity="0.55"/><rect x="272.4" y="16.0" width="0.9" height="0.9" fill="#b0a898" opacity="0.55"/><rect x="47.4" y="69.9" width="1.3" height="1.3" fill="#a89c8c" opacity="0.55"/><rect x="110.3" y="105.8" width="1.9" height="1.9" fill="#8a7e70" opacity="0.55"/><rect x="337.8" y="150.5" width="1.6" height="1.6" fill="#9a8e80" opacity="0.55"/><rect x="217.4" y="117.1" width="1.4" height="1.4" fill="#b0a898" opacity="0.55"/><rect x="169.1" y="192.7" width="1.9" height="1.9" fill="#4a4038" opacity="0.55"/><rect x="157.4" y="77.7" width="1.6" height="1.6" fill="#b0a898" opacity="0.55"/><rect x="314.2" y="60.5" width="1.0" height="1.0" fill="#4a4038" opacity="0.55"/><rect x="124.8" y="116.6" width="1.9" height="1.9" fill="#a89c8c" opacity="0.55"/><rect x="375.0" y="157.3" width="1.0" height="1.0" fill="#b0a898" opacity="0.55"/><rect x="280.7" y="70.6" width="1.5" height="1.5" fill="#3a332c" opacity="0.55"/><rect x="358.7" y="147.8" width="0.9" height="0.9" fill="#3a332c" opacity="0.55"/><rect x="271.1" y="82.5" width="1.8" height="1.8" fill="#4a4038" opacity="0.55"/><rect x="365.6" y="163.7" width="0.9" height="0.9" fill="#3a332c" opacity="0.55"/><rect x="365.8" y="25.1" width="1.6" height="1.6" fill="#4a4038" opacity="0.55"/><rect x="295.1" y="50.9" width="1.1" height="1.1" fill="#8a7e70" opacity="0.55"/><rect x="232.1" y="61.9" width="1.5" height="1.5" fill="#9a8e80" opacity="0.55"/><rect x="240.5" y="56.3" width="1.9" height="1.9" fill="#b0a898" opacity="0.55"/><rect x="117.7" y="54.5" width="1.3" height="1.3" fill="#9a8e80" opacity="0.55"/><rect x="284.9" y="29.2" width="0.8" height="0.8" fill="#a89c8c" opacity="0.55"/><rect x="228.1" y="187.5" width="1.6" height="1.6" fill="#4a4038" opacity="0.55"/><rect x="340.4" y="100.9" width="1.0" height="1.0" fill="#b0a898" opacity="0.55"/><rect x="368.7" y="71.3" width="0.9" height="0.9" fill="#b0a898" opacity="0.55"/><rect x="302.4" y="134.6" width="1.4" height="1.4" fill="#a89c8c" opacity="0.55"/><rect x="286.9" y="188.9" width="1.3" height="1.3" fill="#a89c8c" opacity="0.55"/><rect x="325.8" y="188.4" width="2.0" height="2.0" fill="#9a8e80" opacity="0.55"/><rect x="176.0" y="104.6" width="2.0" height="2.0" fill="#b0a898" opacity="0.55"/><rect x="355.9" y="177.5" width="1.2" height="1.2" fill="#9a8e80" opacity="0.55"/><rect x="245.9" y="187.3" width="1.1" height="1.1" fill="#3a332c" opacity="0.55"/><rect x="377.3" y="113.8" width="1.9" height="1.9" fill="#4a4038" opacity="0.55"/><rect x="86.6" y="106.3" width="1.0" height="1.0" fill="#3a332c" opacity="0.55"/><rect x="79.3" y="41.0" width="1.6" height="1.6" fill="#4a4038" opacity="0.55"/><rect x="285.3" y="12.7" width="1.7" height="1.7" fill="#3a332c" opacity="0.55"/><rect x="234.0" y="154.6" width="1.5" height="1.5" fill="#a89c8c" opacity="0.55"/><rect x="258.2" y="87.4" width="1.4" height="1.4" fill="#4a4038" opacity="0.55"/><rect x="70.5" y="137.8" width="2.0" height="2.0" fill="#a89c8c" opacity="0.55"/><rect x="203.3" y="188.7" width="1.1" height="1.1" fill="#9a8e80" opacity="0.55"/><rect x="121.1" y="154.0" width="1.2" height="1.2" fill="#3a332c" opacity="0.55"/><rect x="286.8" y="12.2" width="1.2" height="1.2" fill="#b0a898" opacity="0.55"/><rect x="121.3" y="137.5" width="1.2" height="1.2" fill="#4a4038" opacity="0.55"/><rect x="178.8" y="106.0" width="1.7" height="1.7" fill="#b0a898" opacity="0.55"/><rect x="275.7" y="132.0" width="1.2" height="1.2" fill="#3a332c" opacity="0.55"/><rect x="116.1" y="192.9" width="1.0" height="1.0" fill="#4a4038" opacity="0.55"/><rect x="295.2" y="125.7" width="1.6" height="1.6" fill="#4a4038" opacity="0.55"/><rect x="351.4" y="154.7" width="1.8" height="1.8" fill="#b0a898" opacity="0.55"/><rect x="300.0" y="139.9" width="1.8" height="1.8" fill="#8a7e70" opacity="0.55"/><rect x="68.8" y="95.3" width="1.2" height="1.2" fill="#b0a898" opacity="0.55"/><rect x="352.9" y="31.4" width="1.9" height="1.9" fill="#8a7e70" opacity="0.55"/><rect x="109.7" y="112.5" width="1.2" height="1.2" fill="#a89c8c" opacity="0.55"/><rect x="217.9" y="32.2" width="1.7" height="1.7" fill="#a89c8c" opacity="0.55"/><rect x="207.2" y="181.7" width="1.8" height="1.8" fill="#4a4038" opacity="0.55"/><rect x="195.2" y="108.0" width="1.5" height="1.5" fill="#4a4038" opacity="0.55"/><rect x="231.0" y="138.5" width="1.7" height="1.7" fill="#3a332c" opacity="0.55"/><rect x="175.6" y="165.9" width="1.1" height="1.1" fill="#b0a898" opacity="0.55"/><rect x="65.8" y="90.9" width="0.9" height="0.9" fill="#b0a898" opacity="0.55"/><rect x="379.0" y="188.5" width="2.0" height="2.0" fill="#9a8e80" opacity="0.55"/><rect x="201.5" y="64.8" width="1.7" height="1.7" fill="#a89c8c" opacity="0.55"/><rect x="301.4" y="196.9" width="2.0" height="2.0" fill="#b0a898" opacity="0.55"/><rect x="168.3" y="180.2" width="1.8" height="1.8" fill="#4a4038" opacity="0.55"/><rect x="349.3" y="81.7" width="2.0" height="2.0" fill="#b0a898" opacity="0.55"/><rect x="338.3" y="35.4" width="0.9" height="0.9" fill="#3a332c" opacity="0.55"/><rect x="378.6" y="85.1" width="1.7" height="1.7" fill="#a89c8c" opacity="0.55"/><rect x="116.7" y="10.7" width="2.0" height="2.0" fill="#9a8e80" opacity="0.55"/><rect x="198.4" y="147.3" width="1.4" height="1.4" fill="#4a4038" opacity="0.55"/><rect x="320.9" y="57.3" width="1.0" height="1.0" fill="#3a332c" opacity="0.55"/><rect x="105.1" y="177.2" width="0.8" height="0.8" fill="#9a8e80" opacity="0.55"/><rect x="265.5" y="127.5" width="1.1" height="1.1" fill="#9a8e80" opacity="0.55"/><rect x="63.9" y="123.4" width="1.5" height="1.5" fill="#4a4038" opacity="0.55"/><rect x="280.1" y="19.3" width="0.9" height="0.9" fill="#b0a898" opacity="0.55"/><rect x="190.2" y="113.1" width="1.0" height="1.0" fill="#9a8e80" opacity="0.55"/><rect x="378.8" y="54.7" width="1.5" height="1.5" fill="#b0a898" opacity="0.55"/><rect x="237.3" y="157.6" width="1.1" height="1.1" fill="#3a332c" opacity="0.55"/><rect x="338.9" y="198.3" width="1.1" height="1.1" fill="#8a7e70" opacity="0.55"/><rect x="143.2" y="21.6" width="1.9" height="1.9" fill="#8a7e70" opacity="0.55"/><rect x="350.9" y="129.6" width="1.5" height="1.5" fill="#4a4038" opacity="0.55"/><rect x="56.9" y="75.8" width="1.6" height="1.6" fill="#b0a898" opacity="0.55"/><rect x="308.2" y="70.9" width="1.3" height="1.3" fill="#4a4038" opacity="0.55"/><rect x="143.0" y="45.1" width="1.4" height="1.4" fill="#8a7e70" opacity="0.55"/><rect x="329.8" y="67.4" width="1.0" height="1.0" fill="#b0a898" opacity="0.55"/><rect x="198.4" y="21.0" width="2.0" height="2.0" fill="#4a4038" opacity="0.55"/><rect x="230.5" y="35.6" width="1.1" height="1.1" fill="#a89c8c" opacity="0.55"/><rect x="153.3" y="25.1" width="1.8" height="1.8" fill="#4a4038" opacity="0.55"/><rect x="72.4" y="148.4" width="0.9" height="0.9" fill="#a89c8c" opacity="0.55"/><rect x="169.2" y="125.5" width="1.8" height="1.8" fill="#9a8e80" opacity="0.55"/><rect x="105.0" y="155.5" width="1.6" height="1.6" fill="#b0a898" opacity="0.55"/><rect x="114.8" y="49.9" width="1.2" height="1.2" fill="#3a332c" opacity="0.55"/><rect x="350.1" y="50.5" width="2.0" height="2.0" fill="#a89c8c" opacity="0.55"/><rect x="80.9" y="200.9" width="1.9" height="1.9" fill="#4a4038" opacity="0.55"/><rect x="277.5" y="144.4" width="1.9" height="1.9" fill="#4a4038" opacity="0.55"/><rect x="228.7" y="158.1" width="1.4" height="1.4" fill="#4a4038" opacity="0.55"/><rect x="261.6" y="68.9" width="1.4" height="1.4" fill="#3a332c" opacity="0.55"/><rect x="210.1" y="28.8" width="1.4" height="1.4" fill="#b0a898" opacity="0.55"/><rect x="326.5" y="184.6" width="1.2" height="1.2" fill="#3a332c" opacity="0.55"/><rect x="56.5" y="175.0" width="1.0" height="1.0" fill="#b0a898" opacity="0.55"/><rect x="129.7" y="188.5" width="1.7" height="1.7" fill="#8a7e70" opacity="0.55"/><rect x="141.4" y="47.5" width="1.3" height="1.3" fill="#a89c8c" opacity="0.55"/><rect x="324.3" y="105.4" width="1.9" height="1.9" fill="#b0a898" opacity="0.55"/><rect x="155.8" y="155.8" width="2.0" height="2.0" fill="#4a4038" opacity="0.55"/><rect x="259.2" y="103.7" width="1.7" height="1.7" fill="#a89c8c" opacity="0.55"/><rect x="160.7" y="36.7" width="1.4" height="1.4" fill="#8a7e70" opacity="0.55"/><rect x="352.7" y="113.5" width="1.9" height="1.9" fill="#b0a898" opacity="0.55"/><rect x="219.1" y="170.3" width="1.9" height="1.9" fill="#9a8e80" opacity="0.55"/><rect x="268.2" y="156.0" width="1.0" height="1.0" fill="#4a4038" opacity="0.55"/><rect x="255.4" y="23.0" width="0.8" height="0.8" fill="#a89c8c" opacity="0.55"/><rect x="212.9" y="81.3" width="1.6" height="1.6" fill="#8a7e70" opacity="0.55"/><rect x="358.5" y="184.3" width="1.4" height="1.4" fill="#b0a898" opacity="0.55"/><rect x="43.2" y="115.4" width="0.8" height="0.8" fill="#9a8e80" opacity="0.55"/><rect x="286.5" y="112.3" width="0.8" height="0.8" fill="#3a332c" opacity="0.55"/><rect x="317.5" y="138.7" width="0.9" height="0.9" fill="#a89c8c" opacity="0.55"/><rect x="73.7" y="38.4" width="1.5" height="1.5" fill="#a89c8c" opacity="0.55"/><rect x="126.8" y="77.7" width="0.9" height="0.9" fill="#4a4038" opacity="0.55"/><rect x="367.2" y="97.7" width="2.0" height="2.0" fill="#a89c8c" opacity="0.55"/><rect x="117.8" y="140.7" width="1.6" height="1.6" fill="#9a8e80" opacity="0.55"/><rect x="332.8" y="155.1" width="1.3" height="1.3" fill="#9a8e80" opacity="0.55"/><rect x="169.2" y="100.9" width="0.8" height="0.8" fill="#b0a898" opacity="0.55"/><rect x="99.3" y="105.5" width="1.6" height="1.6" fill="#4a4038" opacity="0.55"/><rect x="153.6" y="196.7" width="1.9" height="1.9" fill="#9a8e80" opacity="0.55"/><rect x="353.5" y="53.9" width="1.9" height="1.9" fill="#b0a898" opacity="0.55"/><rect x="202.7" y="18.9" width="1.6" height="1.6" fill="#9a8e80" opacity="0.55"/><rect x="136.3" y="113.7" width="0.8" height="0.8" fill="#b0a898" opacity="0.55"/><rect x="356.8" y="70.1" width="1.5" height="1.5" fill="#a89c8c" opacity="0.55"/><rect x="296.8" y="146.1" width="1.9" height="1.9" fill="#4a4038" opacity="0.55"/><rect x="142.8" y="117.7" width="1.8" height="1.8" fill="#8a7e70" opacity="0.55"/><rect x="173.3" y="181.2" width="1.3" height="1.3" fill="#3a332c" opacity="0.55"/><rect x="292.5" y="161.0" width="1.7" height="1.7" fill="#b0a898" opacity="0.55"/><rect x="211.3" y="196.1" width="0.9" height="0.9" fill="#9a8e80" opacity="0.55"/><rect x="119.9" y="24.5" width="1.7" height="1.7" fill="#8a7e70" opacity="0.55"/><rect x="365.7" y="85.8" width="0.8" height="0.8" fill="#3a332c" opacity="0.55"/><rect x="133.9" y="199.6" width="1.1" height="1.1" fill="#4a4038" opacity="0.55"/><rect x="229.0" y="81.7" width="1.6" height="1.6" fill="#a89c8c" opacity="0.55"/><rect x="265.6" y="26.4" width="1.2" height="1.2" fill="#8a7e70" opacity="0.55"/><rect x="124.8" y="24.0" width="1.0" height="1.0" fill="#3a332c" opacity="0.55"/><rect x="283.0" y="131.1" width="1.3" height="1.3" fill="#b0a898" opacity="0.55"/><rect x="163.6" y="27.5" width="1.3" height="1.3" fill="#3a332c" opacity="0.55"/><rect x="299.9" y="29.5" width="1.0" height="1.0" fill="#9a8e80" opacity="0.55"/><rect x="193.6" y="116.0" width="0.9" height="0.9" fill="#4a4038" opacity="0.55"/><rect x="71.5" y="115.9" width="1.5" height="1.5" fill="#8a7e70" opacity="0.55"/><rect x="151.3" y="83.6" width="1.3" height="1.3" fill="#3a332c" opacity="0.55"/><rect x="305.9" y="148.4" width="1.9" height="1.9" fill="#8a7e70" opacity="0.55"/><rect x="373.6" y="119.2" width="1.6" height="1.6" fill="#a89c8c" opacity="0.55"/><rect x="98.6" y="61.4" width="1.4" height="1.4" fill="#3a332c" opacity="0.55"/><rect x="62.5" y="93.0" width="1.2" height="1.2" fill="#4a4038" opacity="0.55"/><rect x="307.1" y="79.0" width="1.7" height="1.7" fill="#a89c8c" opacity="0.55"/><rect x="209.6" y="127.8" width="0.9" height="0.9" fill="#4a4038" opacity="0.55"/><rect x="144.6" y="191.2" width="1.8" height="1.8" fill="#3a332c" opacity="0.55"/><rect x="170.2" y="174.7" width="1.2" height="1.2" fill="#4a4038" opacity="0.55"/><rect x="318.3" y="174.2" width="1.0" height="1.0" fill="#8a7e70" opacity="0.55"/><rect x="150.0" y="190.9" width="1.4" height="1.4" fill="#a89c8c" opacity="0.55"/><rect x="101.4" y="86.1" width="1.1" height="1.1" fill="#3a332c" opacity="0.55"/><rect x="277.3" y="103.8" width="1.7" height="1.7" fill="#8a7e70" opacity="0.55"/><rect x="151.8" y="63.5" width="1.2" height="1.2" fill="#4a4038" opacity="0.55"/><rect x="357.9" y="48.2" width="1.0" height="1.0" fill="#8a7e70" opacity="0.55"/><rect x="302.0" y="15.1" width="1.4" height="1.4" fill="#b0a898" opacity="0.55"/><rect x="281.8" y="93.7" width="1.8" height="1.8" fill="#3a332c" opacity="0.55"/><rect x="64.5" y="171.9" width="1.6" height="1.6" fill="#4a4038" opacity="0.55"/><rect x="88.3" y="67.8" width="1.6" height="1.6" fill="#3a332c" opacity="0.55"/><rect x="284.2" y="160.7" width="1.3" height="1.3" fill="#9a8e80" opacity="0.55"/><rect x="244.3" y="121.2" width="1.4" height="1.4" fill="#8a7e70" opacity="0.55"/><rect x="353.9" y="142.1" width="0.8" height="0.8" fill="#8a7e70" opacity="0.55"/><rect x="370.3" y="144.0" width="1.5" height="1.5" fill="#8a7e70" opacity="0.55"/><rect x="351.9" y="30.9" width="1.6" height="1.6" fill="#a89c8c" opacity="0.55"/><rect x="161.7" y="133.6" width="1.5" height="1.5" fill="#9a8e80" opacity="0.55"/><rect x="260.3" y="133.5" width="2.0" height="2.0" fill="#3a332c" opacity="0.55"/><rect x="187.4" y="12.0" width="1.1" height="1.1" fill="#3a332c" opacity="0.55"/><rect x="294.9" y="116.6" width="1.5" height="1.5" fill="#b0a898" opacity="0.55"/><rect x="192.6" y="84.7" width="1.5" height="1.5" fill="#b0a898" opacity="0.55"/><rect x="211.2" y="75.9" width="1.4" height="1.4" fill="#9a8e80" opacity="0.55"/><rect x="141.4" y="185.8" width="0.9" height="0.9" fill="#9a8e80" opacity="0.55"/><rect x="360.8" y="37.1" width="1.2" height="1.2" fill="#3a332c" opacity="0.55"/><rect x="307.7" y="109.5" width="1.4" height="1.4" fill="#3a332c" opacity="0.55"/><rect x="190.0" y="143.1" width="0.9" height="0.9" fill="#3a332c" opacity="0.55"/><rect x="56.2" y="145.8" width="1.8" height="1.8" fill="#9a8e80" opacity="0.55"/><rect x="261.3" y="139.3" width="1.9" height="1.9" fill="#a89c8c" opacity="0.55"/><rect x="292.8" y="108.6" width="1.0" height="1.0" fill="#8a7e70" opacity="0.55"/><rect x="231.3" y="193.1" width="1.8" height="1.8" fill="#a89c8c" opacity="0.55"/><rect x="255.1" y="45.6" width="1.3" height="1.3" fill="#b0a898" opacity="0.55"/><rect x="50.9" y="127.3" width="1.3" height="1.3" fill="#a89c8c" opacity="0.55"/><rect x="187.0" y="10.8" width="1.0" height="1.0" fill="#a89c8c" opacity="0.55"/><rect x="296.8" y="164.5" width="1.5" height="1.5" fill="#9a8e80" opacity="0.55"/><rect x="312.8" y="112.5" width="1.2" height="1.2" fill="#3a332c" opacity="0.55"/><rect x="196.6" y="60.1" width="1.4" height="1.4" fill="#4a4038" opacity="0.55"/><rect x="258.3" y="124.0" width="1.3" height="1.3" fill="#8a7e70" opacity="0.55"/><rect x="79.8" y="77.2" width="1.5" height="1.5" fill="#4a4038" opacity="0.55"/><rect x="317.7" y="144.8" width="1.9" height="1.9" fill="#3a332c" opacity="0.55"/><rect x="241.7" y="138.4" width="0.9" height="0.9" fill="#3a332c" opacity="0.55"/><rect x="144.8" y="45.0" width="1.0" height="1.0" fill="#b0a898" opacity="0.55"/><rect x="173.1" y="123.9" width="1.3" height="1.3" fill="#8a7e70" opacity="0.55"/><rect x="104.2" y="131.4" width="1.9" height="1.9" fill="#b0a898" opacity="0.55"/><rect x="357.4" y="43.1" width="1.4" height="1.4" fill="#a89c8c" opacity="0.55"/><rect x="88.7" y="70.1" width="1.5" height="1.5" fill="#4a4038" opacity="0.55"/><rect x="335.3" y="191.8" width="1.0" height="1.0" fill="#4a4038" opacity="0.55"/><rect x="318.2" y="194.1" width="1.6" height="1.6" fill="#8a7e70" opacity="0.55"/><rect x="180.1" y="103.9" width="1.8" height="1.8" fill="#b0a898" opacity="0.55"/><rect x="207.2" y="25.8" width="1.8" height="1.8" fill="#9a8e80" opacity="0.55"/><rect x="116.0" y="16.2" width="1.4" height="1.4" fill="#a89c8c" opacity="0.55"/><rect x="98.2" y="97.3" width="1.7" height="1.7" fill="#b0a898" opacity="0.55"/><rect x="209.4" y="107.6" width="0.9" height="0.9" fill="#8a7e70" opacity="0.55"/><rect x="304.5" y="167.2" width="1.5" height="1.5" fill="#3a332c" opacity="0.55"/><rect x="298.3" y="155.2" width="1.5" height="1.5" fill="#4a4038" opacity="0.55"/><rect x="377.5" y="29.6" width="1.7" height="1.7" fill="#b0a898" opacity="0.55"/><rect x="142.2" y="200.9" width="1.1" height="1.1" fill="#4a4038" opacity="0.55"/><rect x="334.1" y="26.6" width="1.7" height="1.7" fill="#9a8e80" opacity="0.55"/><rect x="121.6" y="164.8" width="1.6" height="1.6" fill="#8a7e70" opacity="0.55"/><rect x="333.8" y="126.6" width="1.0" height="1.0" fill="#4a4038" opacity="0.55"/><rect x="88.3" y="49.5" width="1.8" height="1.8" fill="#a89c8c" opacity="0.55"/><rect x="234.8" y="111.7" width="1.4" height="1.4" fill="#8a7e70" opacity="0.55"/><rect x="151.0" y="144.5" width="1.5" height="1.5" fill="#3a332c" opacity="0.55"/><rect x="364.8" y="108.3" width="1.8" height="1.8" fill="#b0a898" opacity="0.55"/><rect x="87.1" y="153.3" width="1.9" height="1.9" fill="#4a4038" opacity="0.55"/><rect x="378.4" y="175.6" width="1.6" height="1.6" fill="#a89c8c" opacity="0.55"/><rect x="86.1" y="37.9" width="1.8" height="1.8" fill="#3a332c" opacity="0.55"/><rect x="299.9" y="139.2" width="1.0" height="1.0" fill="#4a4038" opacity="0.55"/><rect x="256.0" y="129.9" width="1.3" height="1.3" fill="#4a4038" opacity="0.55"/><rect x="256.4" y="178.1" width="1.3" height="1.3" fill="#9a8e80" opacity="0.55"/><rect x="295.9" y="142.7" width="1.3" height="1.3" fill="#3a332c" opacity="0.55"/><rect x="206.9" y="121.2" width="0.9" height="0.9" fill="#b0a898" opacity="0.55"/><rect x="371.5" y="131.3" width="1.2" height="1.2" fill="#b0a898" opacity="0.55"/><rect x="62.5" y="112.1" width="2.0" height="2.0" fill="#a89c8c" opacity="0.55"/><rect x="321.4" y="104.5" width="1.8" height="1.8" fill="#3a332c" opacity="0.55"/><rect x="155.8" y="120.4" width="1.8" height="1.8" fill="#8a7e70" opacity="0.55"/><rect x="309.0" y="180.8" width="0.9" height="0.9" fill="#9a8e80" opacity="0.55"/><rect x="253.9" y="169.8" width="0.9" height="0.9" fill="#9a8e80" opacity="0.55"/><rect x="332.6" y="94.3" width="2.0" height="2.0" fill="#9a8e80" opacity="0.55"/><rect x="186.5" y="200.2" width="1.9" height="1.9" fill="#a89c8c" opacity="0.55"/><rect x="143.6" y="177.0" width="0.9" height="0.9" fill="#3a332c" opacity="0.55"/><rect x="163.5" y="25.7" width="1.9" height="1.9" fill="#b0a898" opacity="0.55"/><rect x="97.3" y="85.7" width="1.7" height="1.7" fill="#3a332c" opacity="0.55"/><rect x="297.8" y="92.0" width="1.6" height="1.6" fill="#9a8e80" opacity="0.55"/><rect x="41.4" y="101.1" width="1.5" height="1.5" fill="#a89c8c" opacity="0.55"/><rect x="217.6" y="95.0" width="1.6" height="1.6" fill="#9a8e80" opacity="0.55"/><rect x="318.8" y="198.7" width="1.6" height="1.6" fill="#4a4038" opacity="0.55"/><rect x="203.4" y="53.7" width="1.7" height="1.7" fill="#9a8e80" opacity="0.55"/><rect x="75.8" y="69.9" width="1.0" height="1.0" fill="#3a332c" opacity="0.55"/><rect x="304.0" y="153.9" width="1.6" height="1.6" fill="#a89c8c" opacity="0.55"/><rect x="271.2" y="23.1" width="0.8" height="0.8" fill="#8a7e70" opacity="0.55"/><rect x="262.0" y="94.1" width="1.1" height="1.1" fill="#b0a898" opacity="0.55"/><rect x="295.4" y="185.7" width="1.6" height="1.6" fill="#8a7e70" opacity="0.55"/><rect x="333.4" y="26.6" width="1.0" height="1.0" fill="#9a8e80" opacity="0.55"/><rect x="82.9" y="149.4" width="2.0" height="2.0" fill="#3a332c" opacity="0.55"/><rect x="147.9" y="36.7" width="1.6" height="1.6" fill="#3a332c" opacity="0.55"/><rect x="125.4" y="124.8" width="1.5" height="1.5" fill="#b0a898" opacity="0.55"/><rect x="305.8" y="141.9" width="1.9" height="1.9" fill="#b0a898" opacity="0.55"/><rect x="110.9" y="125.9" width="1.7" height="1.7" fill="#a89c8c" opacity="0.55"/><rect x="141.5" y="20.4" width="1.4" height="1.4" fill="#a89c8c" opacity="0.55"/><rect x="79.3" y="105.4" width="0.9" height="0.9" fill="#8a7e70" opacity="0.55"/><rect x="343.2" y="12.3" width="1.9" height="1.9" fill="#3a332c" opacity="0.55"/><rect x="85.9" y="174.4" width="1.3" height="1.3" fill="#8a7e70" opacity="0.55"/><rect x="226.8" y="43.0" width="1.9" height="1.9" fill="#4a4038" opacity="0.55"/><rect x="302.9" y="13.2" width="0.8" height="0.8" fill="#9a8e80" opacity="0.55"/><rect x="114.4" y="186.2" width="1.4" height="1.4" fill="#4a4038" opacity="0.55"/><rect x="254.7" y="105.7" width="1.3" height="1.3" fill="#4a4038" opacity="0.55"/><rect x="177.8" y="132.3" width="1.5" height="1.5" fill="#8a7e70" opacity="0.55"/><rect x="135.3" y="69.2" width="1.9" height="1.9" fill="#8a7e70" opacity="0.55"/><rect x="372.3" y="39.7" width="1.3" height="1.3" fill="#3a332c" opacity="0.55"/><rect x="256.7" y="169.4" width="1.6" height="1.6" fill="#b0a898" opacity="0.55"/><rect x="146.5" y="93.6" width="0.9" height="0.9" fill="#a89c8c" opacity="0.55"/><rect x="70.3" y="93.0" width="1.5" height="1.5" fill="#4a4038" opacity="0.55"/><rect x="59.7" y="137.2" width="1.7" height="1.7" fill="#b0a898" opacity="0.55"/><rect x="81.6" y="145.2" width="0.8" height="0.8" fill="#b0a898" opacity="0.55"/><rect x="209.8" y="76.2" width="1.7" height="1.7" fill="#8a7e70" opacity="0.55"/><rect x="286.1" y="41.9" width="1.7" height="1.7" fill="#a89c8c" opacity="0.55"/><rect x="338.0" y="150.0" width="1.7" height="1.7" fill="#9a8e80" opacity="0.55"/><rect x="51.0" y="164.2" width="1.4" height="1.4" fill="#3a332c" opacity="0.55"/><rect x="130.4" y="196.2" width="0.9" height="0.9" fill="#b0a898" opacity="0.55"/><rect x="195.8" y="78.8" width="1.8" height="1.8" fill="#4a4038" opacity="0.55"/><rect x="97.7" y="40.0" width="1.9" height="1.9" fill="#9a8e80" opacity="0.55"/><rect x="270.2" y="32.0" width="1.4" height="1.4" fill="#b0a898" opacity="0.55"/><rect x="56.0" y="174.8" width="0.9" height="0.9" fill="#a89c8c" opacity="0.55"/><rect x="164.8" y="185.8" width="1.9" height="1.9" fill="#a89c8c" opacity="0.55"/><rect x="332.5" y="115.6" width="1.7" height="1.7" fill="#b0a898" opacity="0.55"/><rect x="183.6" y="71.5" width="1.9" height="1.9" fill="#4a4038" opacity="0.55"/><rect x="149.8" y="167.8" width="1.2" height="1.2" fill="#8a7e70" opacity="0.55"/><rect x="211.7" y="182.3" width="1.1" height="1.1" fill="#a89c8c" opacity="0.55"/><rect x="216.4" y="18.8" width="0.9" height="0.9" fill="#4a4038" opacity="0.55"/><rect x="199.1" y="63.9" width="1.2" height="1.2" fill="#3a332c" opacity="0.55"/><rect x="229.1" y="11.5" width="1.1" height="1.1" fill="#a89c8c" opacity="0.55"/><rect x="307.7" y="151.3" width="1.4" height="1.4" fill="#a89c8c" opacity="0.55"/><rect x="242.2" y="104.2" width="1.7" height="1.7" fill="#a89c8c" opacity="0.55"/><rect x="226.8" y="162.0" width="0.8" height="0.8" fill="#a89c8c" opacity="0.55"/><rect x="180.4" y="54.5" width="1.6" height="1.6" fill="#3a332c" opacity="0.55"/><rect x="276.8" y="11.8" width="0.8" height="0.8" fill="#3a332c" opacity="0.55"/><rect x="264.5" y="172.2" width="1.2" height="1.2" fill="#b0a898" opacity="0.55"/><rect x="110.8" y="197.8" width="1.4" height="1.4" fill="#4a4038" opacity="0.55"/><rect x="61.4" y="200.4" width="1.1" height="1.1" fill="#b0a898" opacity="0.55"/><rect x="55.9" y="54.2" width="1.3" height="1.3" fill="#8a7e70" opacity="0.55"/><rect x="345.5" y="97.6" width="0.9" height="0.9" fill="#b0a898" opacity="0.55"/><rect x="73.5" y="35.5" width="0.9" height="0.9" fill="#4a4038" opacity="0.55"/><rect x="234.1" y="93.1" width="1.1" height="1.1" fill="#a89c8c" opacity="0.55"/><rect x="129.7" y="70.2" width="1.6" height="1.6" fill="#4a4038" opacity="0.55"/><rect x="291.0" y="70.7" width="1.1" height="1.1" fill="#3a332c" opacity="0.55"/><rect x="361.8" y="36.0" width="0.9" height="0.9" fill="#8a7e70" opacity="0.55"/><rect x="76.9" y="95.9" width="1.3" height="1.3" fill="#3a332c" opacity="0.55"/><rect x="223.2" y="194.2" width="1.3" height="1.3" fill="#a89c8c" opacity="0.55"/><rect x="198.5" y="172.8" width="1.0" height="1.0" fill="#9a8e80" opacity="0.55"/><rect x="274.3" y="167.8" width="1.5" height="1.5" fill="#b0a898" opacity="0.55"/><rect x="114.1" y="173.6" width="0.9" height="0.9" fill="#a89c8c" opacity="0.55"/><rect x="125.4" y="77.9" width="0.9" height="0.9" fill="#8a7e70" opacity="0.55"/><rect x="142.6" y="166.6" width="0.8" height="0.8" fill="#a89c8c" opacity="0.55"/><rect x="178.5" y="96.4" width="1.5" height="1.5" fill="#b0a898" opacity="0.55"/><rect x="73.2" y="29.5" width="0.9" height="0.9" fill="#a89c8c" opacity="0.55"/><rect x="62.0" y="159.2" width="1.0" height="1.0" fill="#a89c8c" opacity="0.55"/><rect x="321.0" y="81.1" width="1.9" height="1.9" fill="#b0a898" opacity="0.55"/><rect x="69.6" y="121.9" width="0.8" height="0.8" fill="#9a8e80" opacity="0.55"/><rect x="62.9" y="182.4" width="1.8" height="1.8" fill="#4a4038" opacity="0.55"/><rect x="72.3" y="171.8" width="0.9" height="0.9" fill="#3a332c" opacity="0.55"/><rect x="361.4" y="19.7" width="1.3" height="1.3" fill="#8a7e70" opacity="0.55"/><rect x="287.3" y="104.8" width="1.6" height="1.6" fill="#4a4038" opacity="0.55"/><rect x="99.8" y="51.0" width="1.1" height="1.1" fill="#a89c8c" opacity="0.55"/><rect x="192.6" y="38.4" width="1.5" height="1.5" fill="#8a7e70" opacity="0.55"/><rect x="124.6" y="66.4" width="1.9" height="1.9" fill="#4a4038" opacity="0.55"/><rect x="203.9" y="26.8" width="1.0" height="1.0" fill="#4a4038" opacity="0.55"/><rect x="108.8" y="179.0" width="1.1" height="1.1" fill="#8a7e70" opacity="0.55"/><rect x="379.0" y="113.8" width="2.0" height="2.0" fill="#9a8e80" opacity="0.55"/><rect x="306.9" y="78.6" width="1.7" height="1.7" fill="#8a7e70" opacity="0.55"/><rect x="158.0" y="118.0" width="1.3" height="1.3" fill="#3a332c" opacity="0.55"/><rect x="102.1" y="70.9" width="0.8" height="0.8" fill="#a89c8c" opacity="0.55"/><rect x="316.6" y="63.7" width="1.4" height="1.4" fill="#4a4038" opacity="0.55"/><rect x="301.7" y="200.9" width="0.9" height="0.9" fill="#a89c8c" opacity="0.55"/><rect x="264.3" y="60.9" width="0.9" height="0.9" fill="#b0a898" opacity="0.55"/><rect x="379.8" y="51.9" width="1.2" height="1.2" fill="#4a4038" opacity="0.55"/><rect x="326.3" y="171.4" width="1.1" height="1.1" fill="#a89c8c" opacity="0.55"/><rect x="149.1" y="151.0" width="1.9" height="1.9" fill="#3a332c" opacity="0.55"/><rect x="50.6" y="143.8" width="1.5" height="1.5" fill="#8a7e70" opacity="0.55"/><rect x="232.5" y="46.0" width="1.5" height="1.5" fill="#4a4038" opacity="0.55"/><rect x="100.7" y="17.3" width="1.1" height="1.1" fill="#9a8e80" opacity="0.55"/><rect x="115.4" y="110.6" width="1.2" height="1.2" fill="#9a8e80" opacity="0.55"/><rect x="249.8" y="164.0" width="1.7" height="1.7" fill="#3a332c" opacity="0.55"/><rect x="353.4" y="171.3" width="0.9" height="0.9" fill="#3a332c" opacity="0.55"/><rect x="91.2" y="144.6" width="1.7" height="1.7" fill="#a89c8c" opacity="0.55"/><rect x="328.8" y="174.4" width="1.2" height="1.2" fill="#9a8e80" opacity="0.55"/><rect x="361.3" y="85.6" width="1.2" height="1.2" fill="#9a8e80" opacity="0.55"/><rect x="150.7" y="196.4" width="1.9" height="1.9" fill="#b0a898" opacity="0.55"/><rect x="310.2" y="193.5" width="1.2" height="1.2" fill="#b0a898" opacity="0.55"/><rect x="281.4" y="117.3" width="1.7" height="1.7" fill="#8a7e70" opacity="0.55"/><rect x="116.9" y="122.5" width="1.3" height="1.3" fill="#a89c8c" opacity="0.55"/><rect x="290.6" y="66.3" width="1.7" height="1.7" fill="#a89c8c" opacity="0.55"/><rect x="363.6" y="191.2" width="1.8" height="1.8" fill="#4a4038" opacity="0.55"/><rect x="303.1" y="118.4" width="1.5" height="1.5" fill="#a89c8c" opacity="0.55"/><rect x="354.2" y="194.8" width="1.6" height="1.6" fill="#a89c8c" opacity="0.55"/><rect x="76.4" y="104.8" width="1.7" height="1.7" fill="#3a332c" opacity="0.55"/><rect x="121.9" y="197.6" width="1.6" height="1.6" fill="#a89c8c" opacity="0.55"/><rect x="368.4" y="166.9" width="1.6" height="1.6" fill="#b0a898" opacity="0.55"/><rect x="342.5" y="95.3" width="1.1" height="1.1" fill="#3a332c" opacity="0.55"/><rect x="276.7" y="76.9" width="1.7" height="1.7" fill="#9a8e80" opacity="0.55"/><rect x="57.4" y="93.7" width="2.0" height="2.0" fill="#4a4038" opacity="0.55"/><rect x="341.7" y="104.2" width="1.2" height="1.2" fill="#4a4038" opacity="0.55"/><rect x="168.6" y="168.3" width="1.6" height="1.6" fill="#8a7e70" opacity="0.55"/><rect x="274.6" y="41.1" width="1.8" height="1.8" fill="#9a8e80" opacity="0.55"/><rect x="52.4" y="13.8" width="1.9" height="1.9" fill="#3a332c" opacity="0.55"/><rect x="66.2" y="42.5" width="1.0" height="1.0" fill="#4a4038" opacity="0.55"/><rect x="66.5" y="189.9" width="1.2" height="1.2" fill="#9a8e80" opacity="0.55"/><rect x="376.0" y="180.6" width="0.8" height="0.8" fill="#b0a898" opacity="0.55"/><rect x="361.4" y="41.5" width="1.0" height="1.0" fill="#4a4038" opacity="0.55"/><rect x="75.4" y="49.3" width="1.3" height="1.3" fill="#a89c8c" opacity="0.55"/><rect x="229.4" y="186.8" width="1.1" height="1.1" fill="#8a7e70" opacity="0.55"/><rect x="136.7" y="55.4" width="1.3" height="1.3" fill="#9a8e80" opacity="0.55"/><rect x="227.9" y="103.8" width="1.2" height="1.2" fill="#9a8e80" opacity="0.55"/><rect x="186.4" y="66.3" width="1.6" height="1.6" fill="#b0a898" opacity="0.55"/><rect x="204.3" y="28.5" width="1.0" height="1.0" fill="#a89c8c" opacity="0.55"/><rect x="140.2" y="25.6" width="1.2" height="1.2" fill="#9a8e80" opacity="0.55"/><rect x="176.1" y="103.4" width="1.1" height="1.1" fill="#b0a898" opacity="0.55"/><rect x="259.2" y="84.0" width="1.9" height="1.9" fill="#3a332c" opacity="0.55"/><rect x="166.6" y="95.1" width="1.3" height="1.3" fill="#3a332c" opacity="0.55"/><rect x="130.6" y="169.9" width="0.9" height="0.9" fill="#8a7e70" opacity="0.55"/><rect x="296.8" y="137.5" width="1.6" height="1.6" fill="#9a8e80" opacity="0.55"/><rect x="315.8" y="89.1" width="1.1" height="1.1" fill="#8a7e70" opacity="0.55"/><rect x="61.7" y="83.9" width="1.3" height="1.3" fill="#8a7e70" opacity="0.55"/><rect x="223.1" y="175.6" width="1.5" height="1.5" fill="#4a4038" opacity="0.55"/><rect x="121.1" y="67.1" width="1.9" height="1.9" fill="#4a4038" opacity="0.55"/><rect x="283.9" y="105.9" width="1.8" height="1.8" fill="#8a7e70" opacity="0.55"/><rect x="271.4" y="128.5" width="1.9" height="1.9" fill="#9a8e80" opacity="0.55"/><rect x="193.7" y="191.3" width="2.0" height="2.0" fill="#a89c8c" opacity="0.55"/><rect x="315.9" y="34.1" width="0.9" height="0.9" fill="#4a4038" opacity="0.55"/><rect x="273.3" y="48.6" width="1.0" height="1.0" fill="#b0a898" opacity="0.55"/><rect x="243.3" y="71.1" width="1.9" height="1.9" fill="#b0a898" opacity="0.55"/><rect x="63.8" y="84.1" width="1.5" height="1.5" fill="#4a4038" opacity="0.55"/><rect x="332.3" y="109.3" width="1.7" height="1.7" fill="#9a8e80" opacity="0.55"/><rect x="252.8" y="109.8" width="0.9" height="0.9" fill="#4a4038" opacity="0.55"/><rect x="91.9" y="118.2" width="1.7" height="1.7" fill="#8a7e70" opacity="0.55"/><rect x="360.5" y="186.7" width="1.7" height="1.7" fill="#8a7e70" opacity="0.55"/><rect x="308.2" y="175.7" width="1.9" height="1.9" fill="#3a332c" opacity="0.55"/><rect x="130.8" y="135.1" width="1.5" height="1.5" fill="#8a7e70" opacity="0.55"/><rect x="53.7" y="62.6" width="1.5" height="1.5" fill="#a89c8c" opacity="0.55"/><rect x="272.5" y="86.7" width="1.9" height="1.9" fill="#4a4038" opacity="0.55"/><rect x="153.7" y="55.4" width="1.4" height="1.4" fill="#b0a898" opacity="0.55"/><rect x="132.3" y="81.1" width="1.8" height="1.8" fill="#3a332c" opacity="0.55"/><rect x="144.0" y="63.5" width="1.8" height="1.8" fill="#4a4038" opacity="0.55"/><rect x="273.8" y="195.7" width="1.0" height="1.0" fill="#a89c8c" opacity="0.55"/><rect x="372.2" y="94.6" width="1.1" height="1.1" fill="#3a332c" opacity="0.55"/><rect x="182.7" y="133.3" width="1.3" height="1.3" fill="#a89c8c" opacity="0.55"/><rect x="351.6" y="87.8" width="1.7" height="1.7" fill="#4a4038" opacity="0.55"/><rect x="335.8" y="166.8" width="1.7" height="1.7" fill="#8a7e70" opacity="0.55"/><rect x="63.3" y="145.5" width="1.0" height="1.0" fill="#4a4038" opacity="0.55"/><rect x="330.4" y="178.0" width="1.0" height="1.0" fill="#9a8e80" opacity="0.55"/><rect x="338.6" y="48.3" width="1.1" height="1.1" fill="#9a8e80" opacity="0.55"/><rect x="196.2" y="185.3" width="1.0" height="1.0" fill="#b0a898" opacity="0.55"/><rect x="166.2" y="98.7" width="1.6" height="1.6" fill="#4a4038" opacity="0.55"/><rect x="83.1" y="15.8" width="1.4" height="1.4" fill="#3a332c" opacity="0.55"/><rect x="192.7" y="193.5" width="1.5" height="1.5" fill="#4a4038" opacity="0.55"/><rect x="159.9" y="41.2" width="1.7" height="1.7" fill="#3a332c" opacity="0.55"/><rect x="275.2" y="64.4" width="0.9" height="0.9" fill="#4a4038" opacity="0.55"/><rect x="331.3" y="158.9" width="1.8" height="1.8" fill="#a89c8c" opacity="0.55"/><rect x="261.1" y="139.4" width="1.6" height="1.6" fill="#3a332c" opacity="0.55"/><rect x="215.5" y="175.1" width="0.8" height="0.8" fill="#b0a898" opacity="0.55"/><rect x="350.9" y="133.6" width="1.8" height="1.8" fill="#8a7e70" opacity="0.55"/><rect x="117.1" y="126.2" width="1.7" height="1.7" fill="#3a332c" opacity="0.55"/><rect x="282.2" y="62.6" width="1.8" height="1.8" fill="#4a4038" opacity="0.55"/><rect x="197.1" y="51.7" width="1.6" height="1.6" fill="#3a332c" opacity="0.55"/><rect x="321.3" y="85.9" width="0.8" height="0.8" fill="#9a8e80" opacity="0.55"/><rect x="380.8" y="194.6" width="1.5" height="1.5" fill="#3a332c" opacity="0.55"/><rect x="242.9" y="64.0" width="0.9" height="0.9" fill="#b0a898" opacity="0.55"/><rect x="62.7" y="198.8" width="1.2" height="1.2" fill="#b0a898" opacity="0.55"/><rect x="135.1" y="135.3" width="1.2" height="1.2" fill="#b0a898" opacity="0.55"/><rect x="92.0" y="156.2" width="1.8" height="1.8" fill="#9a8e80" opacity="0.55"/><rect x="313.8" y="124.6" width="1.2" height="1.2" fill="#b0a898" opacity="0.55"/><rect x="88.6" y="14.9" width="2.0" height="2.0" fill="#4a4038" opacity="0.55"/><rect x="129.2" y="89.9" width="1.7" height="1.7" fill="#4a4038" opacity="0.55"/><rect x="239.2" y="200.0" width="1.2" height="1.2" fill="#a89c8c" opacity="0.55"/><rect x="283.5" y="141.1" width="1.7" height="1.7" fill="#b0a898" opacity="0.55"/><rect x="349.2" y="138.3" width="1.2" height="1.2" fill="#8a7e70" opacity="0.55"/><rect x="98.8" y="135.6" width="1.0" height="1.0" fill="#8a7e70" opacity="0.55"/><rect x="74.2" y="34.4" width="1.7" height="1.7" fill="#3a332c" opacity="0.55"/><rect x="231.1" y="184.3" width="1.9" height="1.9" fill="#b0a898" opacity="0.55"/><rect x="263.5" y="52.5" width="1.7" height="1.7" fill="#a89c8c" opacity="0.55"/><rect x="145.4" y="160.5" width="1.2" height="1.2" fill="#3a332c" opacity="0.55"/><rect x="240.1" y="98.6" width="1.4" height="1.4" fill="#9a8e80" opacity="0.55"/><rect x="335.6" y="121.5" width="0.9" height="0.9" fill="#8a7e70" opacity="0.55"/><rect x="343.4" y="105.6" width="1.3" height="1.3" fill="#b0a898" opacity="0.55"/><rect x="142.4" y="20.3" width="1.0" height="1.0" fill="#a89c8c" opacity="0.55"/>
<polygon points="41,10 74,10 72,15 41,24" fill="#b6ae96"/>
<polygon points="41,24 72,15 74,20 41,32" fill="#2e2c28"/>
<!-- road -->
<polygon points="41,46 52,46 147,201 118,201 41,92" fill="#8d8c88"/>
<polygon points="52,46 58,47 153,195 147,201" fill="#aaa396"/>
<line x1="46" y1="60" x2="132" y2="201" stroke="#b0afa8" stroke-width="0.6" stroke-dasharray="3,3"/>
<polygon points="41,92 118,201 41,201" fill="#4f463c"/>
<polygon points="41,138 56,148 57,180 41,176" fill="#8a96b0"/>
<path d="M42,142 L55,150 M42,148 L55,156 M42,154 L55,162 M42,160 L55,168 M42,166 L55,174" fill="none" stroke="#e0e4ee" stroke-width="1.2"/>
<!-- main long building -->
<polygon points="61,71 82,60 127,121 110,135" fill="#c4c2bc" stroke="#eeeeee" stroke-width="1.2"/>
<!-- brown roofs -->
<polygon points="92,60 109,51 150,108 131,120" fill="#6a5a48" stroke="#d0d0d0" stroke-width="0.9"/>
<polygon points="93,61 104,56 112,67 101,73" fill="#3a3630" stroke="#e8e8e8" stroke-width="0.8"/>
<line x1="103" y1="76" x2="120" y2="67" stroke="#d8d8d8" stroke-width="0.8"/>
<line x1="112" y1="89" x2="129" y2="80" stroke="#d8d8d8" stroke-width="0.8"/>
<line x1="121" y1="102" x2="139" y2="93" stroke="#d8d8d8" stroke-width="0.8"/>
<polygon points="122,60 140,55 146,72 129,76" fill="#3a332c" stroke="#c8ccd8" stroke-width="0.7"/>
<!-- yard / shadow area -->
<polygon points="145,47 210,47 212,105 165,105 150,80" fill="#55544f"/>
<polygon points="167,52 197,52 197,85 167,85" fill="#4a4a48"/>
<polygon points="147,87 162,87 162,103 147,103" fill="#c8c8c4"/>
<polygon points="150,56 170,56 172,92 155,92" fill="#4e5a36" opacity="0.8"/>
<polygon points="128,118 148,98 168,118 150,135" fill="#2c2e30"/>
<polygon points="165,100 210,100 212,116 170,116" fill="#8a8a82"/>
<!-- central building -->
<polygon points="209,47 268,45 271,94 212,96" fill="#9c9c9a"/>
<rect x="209" y="47" width="60" height="11" fill="#b4b4b0"/>
<rect x="209" y="58" width="61" height="3" fill="#888886"/>
<rect x="210" y="70" width="61" height="2.5" fill="#707070"/>
<polygon points="214,88 274,85 277,106 218,109" fill="#999996"/>
<polygon points="218,103 277,101 279,116 222,120" fill="#3c3c3c"/>
<!-- top right -->
<polygon points="278,10 322,10 330,45 300,52 282,47" fill="#7d6e6c"/>
<polygon points="318,10 381,10 381,80 350,62 330,45" fill="#6e8644"/>
<polyline points="332,10 355,45 350,72" fill="none" stroke="#cfcfcf" stroke-width="1.1"/>
<polyline points="320,36 363,20" fill="none" stroke="#c8c8c8" stroke-width="1"/>
<polygon points="343,46 372,45 381,58 381,95 350,96" fill="#6c6c68"/>
<polygon points="350,52 362,50 366,62 354,66" fill="#a8a8a0"/>
<polygon points="362,68 381,58 381,88 368,92" fill="#d6d6d6"/>
<polygon points="330,45 343,46 345,95 325,100" fill="#5e5a4c"/>
<!-- right lower -->
<polygon points="322,100 381,92 381,125 335,128" fill="#75685c"/>
<polygon points="300,150 338,128 352,160 318,182" fill="#4f4b45"/>
<polygon points="338,122 381,118 381,162 350,166" fill="#9c9ea6"/>
<polygon points="306,180 340,152 356,162 352,201 312,201" fill="#8c8e96"/>
<path d="M340,130 L381,126 M342,140 L381,136 M346,150 L381,146 M310,185 L350,170 M316,193 L352,178" fill="none" stroke="#5c5e66" stroke-width="1.1"/>
<polygon points="352,160 381,162 381,201 352,201" fill="#6e6254"/>
<polygon points="348,173 378,179 379,189 352,186" fill="#6d7d4a"/>
<polygon points="280,150 287,150 287,186 280,186" fill="#c4c4c0"/>
<!-- IFT region / middle -->
<polygon points="138,122 155,121 182,160 168,170" fill="#a4a4a0" stroke="#d4d4d4" stroke-width="0.6"/>
<polygon points="118,143 138,125 166,170 150,178 122,170" fill="#8e8866"/>
<polygon points="157,118 210,116 210,155 180,156" fill="#6e7260"/>
<polygon points="225,111 240,114 262,112 292,114 322,152 296,162 238,150 212,140" fill="#b4ad9e"/>
<polygon points="238,117 262,116 264,140 240,140" fill="#d2d0c8"/>
<polygon points="212,128 238,126 238,140 214,142" fill="#7f9452"/>
<polygon points="277,109 285,104 334,146 326,154" fill="#6a6a6a" stroke="#e4e4e4" stroke-width="0.9"/>
<polygon points="170,157 238,155 238,176 171,177" fill="#8f8f8d"/>
<polygon points="238,151 285,148 288,168 240,170" fill="#777775"/>
<polygon points="240,168 288,166 288,186 242,184" fill="#d2cdbf"/>
<polygon points="289,143 318,152 312,170 285,162" fill="#eeeeec"/>
<!-- bottom trees -->
<polygon points="135,180 300,182 318,201 130,201" fill="#5c4e42"/>

<rect x="41" y="10" width="340" height="191" fill="#ffffff" filter="url(#nz)" opacity="0.10"/>
</svg>
<div class="ob" style="left:98px;top:25.5px;width:47px;height:32.5px"><div class="ol">Demohaus</div><div class="ov">1.80 kW</div></div>
<div class="ob" style="left:171px;top:14px;width:47.5px;height:32.5px"><div class="ol">F&amp;E Büro (EG)</div><div class="ov">1.59 kW</div></div>
<div class="ob" style="left:225.5px;top:14px;width:54px;height:32.5px"><div class="ol">F&amp;E Büro (OG)</div><div class="ov">946.00 W</div></div>
<div class="ob" style="left:287px;top:44px;width:56px;height:32.5px"><div class="ol">BGT Versuchsbox 1</div><div class="ov">16.00 W</div></div>
<div class="ob" style="left:287px;top:80px;width:56px;height:32.5px"><div class="ol">BGT Versuchsbox 2</div><div class="ov">1.19 kW</div></div>
<div class="ob" style="left:171px;top:98px;width:54px;height:32.5px"><div class="ol">IFT-Halle</div><div class="ov">22.30 kW</div></div>
<div class="ob" style="left:43.7px;top:166px;width:86px;height:32.5px;background:#008d00"><div class="ol" style="font-size:5.2px">Brennwert (Gasübergabestation)</div><div class="ov" style="font-size:10.5px">11.58 kWh/m3</div></div>

<div class="t" id="h1" style="left:5px;top:214.8px;font-size:14.2px;line-height:18px;color:#d8d9e3">LivingLab@GWI EnergieDashboard</div>
<div id="body" style="position:absolute;left:5px;top:239.15px;font-size:7.7px;line-height:11.17px;color:#ccccdc;white-space:nowrap">
<div class="bl">Die Energieflüsse (Strom, Gas, Wärme) am GWI werden zukünftig digital erfasst und mit moderner Informations- und</div>
<div class="bl">Kommunikationstechnologie verarbeitet. Neben der kabelbasierten Datenübertragung mittels Industrieprotokollen (z.B.</div>
<div class="bl">Modbus TCP) kommen auch funkbasierte Technologien wie LoRaWAN zum Einsatz. Moderne Streaming und</div>
<div class="bl">Automatisierungssoftware überträgt die Daten zu spezialisierten Zeitserien-Datenbanken (TimescaleDB). Neben der</div>
<div class="bl">Datenvisualisierung in Dashboards (Grafana Dashboards) stehen die Verbrauchsdaten der Forschung- und Entwicklung</div>
<div class="bl">für Datenanalysen und Prognosen zur Verfügung.</div>
<div class="bl" style="margin-top:9.2px;font-weight:bold">Ansprechpersonen:</div>
<div class="bl">Jörn Benthin (Teamleiter Adaptive Energiesysteme)</div>
<div class="bl">Frederic Frankenhoff (Projektingenieur)</div>
<div class="bl">Martin Schmelzer (Softwareentwickler)</div>
</div>
<div class="ttl" style="left:0;width:422px;top:378.8px">Strombezug der GWI-Gebäude</div>
<div class="t sl" style="left:5px;top:397.8px">Durchschnittlicher Bezug pro Tag FuE</div>
<div class="t sv" style="right:603px;top:396px"><span class="n">31.28</span><span class="su">kW</span></div>
<div class="t sl" style="left:5px;top:424.8px">Minimale Bezugsleistung FuE letzte Woche</div>
<div class="t sv" style="right:603px;top:423.1px"><span class="n">5.79</span><span class="su">kW</span></div>
<div class="t sl" style="left:5px;top:451.8px">Maximale Bezugsleistung FuE letzte Woche</div>
<div class="t sv" style="right:603px;top:450.3px"><span class="n">120.59</span><span class="su">kW</span></div>
<div class="ttl" style="left:0;width:422px;top:481.2px">Datenbank-Stats</div>
<div class="t dl" style="left:5px;top:495.9px">Datenbank (gesamt)</div>
<div class="t dv" style="right:603.5px;top:495.9px"><span class="n">1.27</span><span class="du">GB</span></div>
<div class="t dl" style="left:5px;top:516.4px">data.electricity</div>
<div class="t dv" style="right:603.5px;top:516.4px"><span class="n">1.26</span><span class="du">GB</span></div>
<div class="t dl" style="left:5px;top:536.6px">data.gaschromatograph</div>
<div class="t dv" style="right:603.5px;top:536.6px"><span class="n">999.42</span><span class="du">kB</span></div>
<div class="t dl" style="left:5px;top:556.6px">data.gie_storage</div>
<div class="t dv" style="right:603.5px;top:556.6px"><span class="n">1.29</span><span class="du">MB</span></div>
<div class="t dl" style="left:5px;top:577px">data.weather</div>
<div class="t dv" style="right:603.5px;top:577px"><span class="n">294.91</span><span class="du">kB</span></div>
<div class="ttl" style="left:451.5px;width:200px;top:11.0px">Sankey Diagramm (Elektr. Leistung)</div>
<div class="t" style="left:442px;top:38.5px;font-size:10.2px;line-height:12px;font-weight:bold;color:#d8d9e3;letter-spacing:-0.45px">Bezug Fue</div>
<div class="t" style="right:358.5px;top:38.5px;font-size:10.2px;line-height:12px;font-weight:bold;color:#d8d9e3;letter-spacing:-0.45px">Bezug Fue</div>
<svg style="position:absolute;left:426px;top:5px" width="251" height="242" viewBox="426 5 251 242"><path d="M457.2,181.3 C551.35,181.3 551.35,67.7 645.5,67.7" fill="none" stroke="#10283a" stroke-width="0.5" stroke-opacity="1.0"/><path d="M457.2,181.6 C551.35,181.6 551.35,83.6 645.5,83.6" fill="none" stroke="#10283a" stroke-width="0.5" stroke-opacity="1.0"/><path d="M457.2,182.2 C551.35,182.2 551.35,100.5 645.5,100.5" fill="none" stroke="#1670a8" stroke-width="1.1" stroke-opacity="1.0"/><path d="M457.2,189.4 C551.35,189.4 551.35,126.35 645.5,126.35" fill="none" stroke="#0b5e8f" stroke-width="17.3" stroke-opacity="1.0"/><path d="M457.2,199.3 C551.35,199.3 551.35,152.5 645.5,152.5" fill="none" stroke="#1670a8" stroke-width="1.2" stroke-opacity="1.0"/><path d="M457.2,200.6 C551.35,200.6 551.35,169.7 645.5,169.7" fill="none" stroke="#1670a8" stroke-width="1.1" stroke-opacity="1.0"/><path d="M457.2,201.9 C551.35,201.9 551.35,187.4 645.5,187.4" fill="none" stroke="#1670a8" stroke-width="1.1" stroke-opacity="1.0"/><path d="M457.2,209.6 C551.35,209.6 551.35,209.5 645.5,209.5" fill="none" stroke="#0b5e8f" stroke-width="10.2" stroke-opacity="1.0"/><rect x="442" y="181.1" width="15.2" height="33.8" rx="1.8" fill="#808080"/><rect x="645.5" y="117.7" width="15.5" height="17.3" rx="1.8" fill="#808080"/><rect x="645.9" y="204.5" width="14.8" height="10" rx="1.8" fill="#808080"/><rect x="645.5" y="67.2" width="15.5" height="1" fill="#0c0c0c"/><rect x="645.5" y="83.1" width="15.5" height="1" fill="#0c0c0c"/><rect x="645.5" y="100.0" width="15.5" height="1" fill="#0c0c0c"/><rect x="645.5" y="152.0" width="15.5" height="1" fill="#5a5a5a"/><rect x="645.5" y="169.2" width="15.5" height="1" fill="#4a4a4a"/><rect x="645.5" y="186.9" width="15.5" height="1" fill="#5a5a5a"/></svg>
<div class="t" style="left:461px;top:193.5px;font-size:7.6px;line-height:8px;color:#e0e0e8">FuE</div>
<div class="t sk" style="right:378.5px;top:64.2px">s_bgtbox_01</div>
<div class="t sk" style="right:378.5px;top:80.3px">s_buroklima_01</div>
<div class="t sk" style="right:378.5px;top:97.0px">s_buroog_01</div>
<div class="t sk" style="right:378.5px;top:123.2px">s_ift_01</div>
<div class="t sk" style="right:378.5px;top:148.6px">s_demo_01</div>
<div class="t sk" style="right:378.5px;top:165.9px">s_bgtbox_02</div>
<div class="t sk" style="right:378.5px;top:183.3px">s_buroeg_01</div>
<div class="t sk" style="right:378.5px;top:206.2px">s_geblaese_01</div>
<svg style="position:absolute;left:426.5px;top:251.5px" width="17" height="17"><polygon points="0,0 16.5,0 0,16.5" fill="#262a33"/><text x="2.9" y="7.0" font-size="6.5" font-weight="bold" fill="#d8d9e3" font-family="Liberation Sans">i</text></svg>
<div class="ttl" style="left:451.5px;width:200px;top:256.8px">Aktuelle Gaszusammensetzung am GWI</div>
<svg style="position:absolute;left:426px;top:251px" width="251" height="221" viewBox="426 251 251 221"><defs><radialGradient id="pg" cx="551.6" cy="340.4" r="58.5" gradientUnits="userSpaceOnUse"><stop offset="0.66" stop-color="#a58f00"/><stop offset="0.84" stop-color="#968300"/><stop offset="1" stop-color="#a48f00"/></radialGradient></defs><path d="M551.80,281.90 A58.5,58.5 0 1 1 516.39,293.68 L528.01,309.09 A39.2,39.2 0 1 0 551.74,301.20 Z" fill="url(#pg)" stroke="#181b1f" stroke-width="0.7"/><path d="M516.39,293.68 A58.5,58.5 0 0 1 533.91,284.64 L539.75,303.03 A39.2,39.2 0 0 0 528.01,309.09 Z" fill="#b35a00" stroke="#181b1f" stroke-width="0.7"/><path d="M534.20,284.55 A58.5,58.5 0 0 1 537.25,283.69 L541.98,302.40 A39.2,39.2 0 0 0 539.94,302.97 Z" fill="#d8283a" stroke="#181b1f" stroke-width="0.7"/><path d="M537.55,283.61 A58.5,58.5 0 0 1 540.54,282.96 L544.19,301.91 A39.2,39.2 0 0 0 542.18,302.35 Z" fill="#4f9a43" stroke="#181b1f" stroke-width="0.7"/><path d="M540.84,282.90 A58.5,58.5 0 0 1 543.86,282.41 L546.42,301.54 A39.2,39.2 0 0 0 544.39,301.87 Z" fill="#3b7fe0" stroke="#181b1f" stroke-width="0.7"/></svg>
<div class="t lg" style="left:439.2px;top:410.2px"><i style="background:#fade2a"></i>methan</div>
<div class="t lg" style="left:478.8px;top:410.2px"><i style="background:#ff9830"></i>ethan</div>
<div class="t lg" style="left:512.6px;top:410.2px"><i style="background:#f2495c"></i>propan</div>
<div class="t lg" style="left:551px;top:410.2px"><i style="background:#73bf69"></i>stickstoff</div>
<div class="t lg" style="left:596px;top:410.2px"><i style="background:#8ab8ff"></i>kohlendioxid</div>
<div class="t lg" style="left:439.2px;top:422.0px"><i style="background:#ca95e5"></i>n_butan</div>
<div class="t lg" style="left:480.3px;top:422.0px"><i style="background:#5794f2"></i>iso_butan</div>
<div class="t lg" style="left:525.8px;top:422.0px"><i style="background:#3274d9"></i>C6+</div>
<div class="t lg" style="left:554.7px;top:422.0px"><i style="background:#37872d"></i>iso_pentan</div>
<div class="t lg" style="left:603.9px;top:422.0px"><i style="background:#e0b400"></i>n_pentan</div>
<div class="t lg" style="left:439.2px;top:434.1px"><i style="background:#705a8f"></i>sauerstoff</div>
<div class="t lg" style="left:486.7px;top:434.1px"><i style="background:#8f73d0"></i>neo_pentan</div>
<div class="t lg" style="left:538.3px;top:434.1px"><i style="background:#fa6400"></i>n_hexan</div>
<div class="t lg" style="left:579.9px;top:434.1px"><i style="background:#c4162a"></i>n_heptan</div>
<div class="t lg" style="left:624.1px;top:434.1px"><i style="background:#1f60c4"></i>n_octan</div>
<div class="t lg" style="left:439.2px;top:445.7px"><i style="background:#8f3bb8"></i>n_nonan</div>
<div class="t lg" style="left:481px;top:445.7px"><i style="background:#c8f2c2"></i>helium</div>
<div class="t lg" style="left:518.6px;top:445.7px"><i style="background:#ffeeb2"></i>wasserstoff</div>
<div class="t lg" style="left:570.9px;top:445.7px"><i style="background:#73d3f2"></i>argon</div>
<div class="t lg" style="left:605px;top:445.7px"><i style="background:#ffcb7d"></i>reserve</div>
<div class="t lg" style="left:439.2px;top:457.4px"><i style="background:#ffa6b0"></i>stream</div>
<div class="ttl" style="left:749.5px;width:200px;top:10.8px">Elektrischer Leistungsbezug</div>
<svg style="position:absolute;left:681px;top:5px" width="337" height="160" viewBox="681 5 337 160"><line x1="707" y1="52.1" x2="1000" y2="52.1" stroke="#2a2d33" stroke-width="0.7"/><line x1="707" y1="70.2" x2="1000" y2="70.2" stroke="#2a2d33" stroke-width="0.7"/><line x1="707" y1="88.3" x2="1000" y2="88.3" stroke="#2a2d33" stroke-width="0.7"/><line x1="707" y1="106.4" x2="1000" y2="106.4" stroke="#2a2d33" stroke-width="0.7"/><line x1="707" y1="124.5" x2="1000" y2="124.5" stroke="#2a2d33" stroke-width="0.7"/><line x1="724.8" y1="37" x2="724.8" y2="125" stroke="#2a2d33" stroke-width="0.7"/><line x1="807.6" y1="37" x2="807.6" y2="125" stroke="#2a2d33" stroke-width="0.7"/><line x1="890.7" y1="37" x2="890.7" y2="125" stroke="#2a2d33" stroke-width="0.7"/><line x1="973.5" y1="37" x2="973.5" y2="125" stroke="#2a2d33" stroke-width="0.7"/><path d="M709.8,93.6 L711.1,94.9 L712.4,96.2 L714.1,103.0 L715.8,108.9 L717.0,109.3 L718.3,109.7 L719.2,109.6 L720.1,109.6 L721.0,109.5 L722.0,109.5 L722.9,109.4 L723.8,109.3 L724.7,109.3 L725.6,109.2 L726.5,109.1 L727.5,109.1 L728.4,109.0 L729.3,109.0 L730.2,108.9 L730.5,99.6 L731.6,99.6 L732.7,99.6 L733.6,108.9 L734.9,108.5 L736.1,108.0 L737.8,92.7 L739.1,91.9 L740.4,87.3 L741.5,88.8 L742.6,87.1 L743.8,84.1 L745.0,89.7 L746.3,90.8 L748.0,85.1 L749.3,87.6 L750.6,94.4 L751.9,95.0 L753.1,99.2 L754.4,98.9 L755.7,104.4 L757.0,107.9 L758.2,108.9 L759.1,108.8 L760.1,108.7 L761.0,108.6 L761.9,108.5 L762.9,108.5 L763.8,108.4 L764.8,108.3 L765.7,108.2 L766.6,108.1 L767.6,108.0 L768.5,107.9 L769.4,107.8 L770.4,107.7 L771.3,107.6 L772.3,107.6 L773.2,107.5 L774.1,107.4 L775.1,107.3 L776.0,107.2 L777.3,97.0 L778.6,91.5 L780.0,93.9 L780.9,89.4 L781.9,89.1 L782.8,91.3 L783.9,92.2 L785.0,88.4 L786.0,88.6 L787.0,90.6 L788.0,89.7 L789.1,90.9 L790.2,92.2 L791.3,92.8 L793.0,100.0 L794.7,111.1 L795.6,111.1 L796.6,111.1 L797.5,111.1 L798.5,111.2 L799.4,111.2 L800.3,111.2 L801.3,111.2 L802.2,111.2 L803.2,111.2 L804.1,111.3 L805.0,111.3 L806.0,111.3 L806.9,111.3 L807.8,111.3 L808.8,111.4 L809.7,111.4 L810.7,111.4 L811.6,111.4 L813.0,102.6 L814.1,102.6 L815.3,102.6 L816.4,102.6 L817.6,111.4 L818.5,111.4 L819.4,111.4 L820.3,111.4 L821.3,111.4 L822.2,111.4 L823.1,111.4 L824.0,111.4 L824.9,111.4 L825.8,111.4 L826.8,111.4 L827.7,111.4 L828.6,111.4 L829.5,111.4 L830.4,111.4 L831.3,111.4 L832.2,111.4 L833.2,111.4 L834.1,111.4 L835.0,111.4 L835.9,111.4 L836.8,111.4 L837.7,111.4 L838.6,111.4 L839.6,111.4 L840.5,111.4 L841.4,111.4 L842.3,111.4 L843.2,111.4 L844.1,111.4 L845.1,111.4 L846.0,111.4 L846.9,111.4 L847.8,111.4 L848.7,111.4 L849.6,111.4 L850.5,111.4 L851.5,111.4 L852.4,111.4 L853.3,111.4 L854.2,111.4 L855.1,102.6 L856.4,102.6 L857.6,102.6 L858.5,111.4 L859.4,111.4 L860.3,111.4 L861.2,111.4 L862.1,111.4 L863.1,111.5 L864.0,111.5 L864.9,111.5 L865.8,111.5 L866.7,111.5 L867.6,111.5 L868.5,111.5 L869.5,111.5 L870.4,111.5 L871.3,111.5 L872.2,111.5 L873.1,111.6 L874.0,111.6 L874.9,111.6 L875.8,111.6 L876.8,111.6 L877.7,111.6 L878.6,111.6 L879.5,111.6 L880.4,111.6 L881.3,111.7 L882.2,111.7 L883.1,111.7 L884.0,111.7 L885.0,111.7 L885.9,111.7 L886.8,111.7 L887.7,111.7 L888.6,111.7 L889.5,111.7 L890.4,111.8 L891.4,111.8 L892.3,111.8 L893.2,111.8 L894.1,111.8 L895.0,111.8 L896.2,102.6 L897.2,102.6 L898.2,102.6 L899.2,102.6 L900.9,104.7 L902.6,96.6 L903.7,95.7 L904.9,96.0 L906.0,94.3 L907.1,91.9 L908.3,94.7 L909.4,92.2 L910.6,95.1 L911.9,95.5 L913.0,97.9 L914.0,95.7 L915.1,89.4 L916.2,87.7 L917.5,96.0 L918.7,102.3 L919.8,106.2 L921.0,106.6 L922.1,109.8 L923.0,113.1 L923.9,113.1 L924.8,113.1 L925.7,113.1 L926.6,113.1 L927.5,113.1 L928.4,113.1 L929.3,113.1 L930.2,113.1 L931.1,113.1 L932.0,113.1 L932.9,113.1 L933.8,113.1 L934.7,113.1 L935.6,113.1 L936.5,113.1 L937.9,103.3 L938.9,103.3 L939.8,103.3 L940.8,103.3 L942.5,113.1 L943.7,113.1 L944.7,75.8 L945.6,74.3 L946.5,70.5 L947.5,65.7 L948.4,64.0 L949.3,62.3 L951.0,65.7 L952.2,63.6 L953.5,63.5 L954.6,61.7 L955.8,63.5 L956.9,67.0 L958.0,63.4 L959.0,60.4 L960.0,62.8 L961.1,64.1 L962.8,66.4 L964.1,72.6 L965.4,80.6 L966.5,81.6 L967.7,82.3 L968.8,83.0 L969.7,83.0 L970.7,83.0 L971.6,83.0 L972.5,83.0 L973.5,83.0 L974.4,83.0 L975.3,83.0 L976.2,83.0 L977.2,83.0 L978.1,83.0 L979.3,74.1 L980.3,74.1 L981.4,74.1 L982.4,74.1 L984.1,82.6 L985.2,78.1 L986.4,74.9 L987.5,69.1 L988.8,62.6 L990.0,57.2 L991.2,49.0 L992.5,43.1 L994.2,56.5 L995.5,59.1 L996.8,58.4 L998.0,58.7 L999.3,60.5 L999.3,124.5 L709.8,124.5 Z" fill="#f2cc0c" fill-opacity="0.13" stroke="none"/><path d="M709.8,93.6 L711.1,94.9 L712.4,96.2 L714.1,103.0 L715.8,108.9 L717.0,109.3 L718.3,109.7 L719.2,109.6 L720.1,109.6 L721.0,109.5 L722.0,109.5 L722.9,109.4 L723.8,109.3 L724.7,109.3 L725.6,109.2 L726.5,109.1 L727.5,109.1 L728.4,109.0 L729.3,109.0 L730.2,108.9 L730.5,99.6 L731.6,99.6 L732.7,99.6 L733.6,108.9 L734.9,108.5 L736.1,108.0 L737.8,92.7 L739.1,91.9 L740.4,87.3 L741.5,88.8 L742.6,87.1 L743.8,84.1 L745.0,89.7 L746.3,90.8 L748.0,85.1 L749.3,87.6 L750.6,94.4 L751.9,95.0 L753.1,99.2 L754.4,98.9 L755.7,104.4 L757.0,107.9 L758.2,108.9 L759.1,108.8 L760.1,108.7 L761.0,108.6 L761.9,108.5 L762.9,108.5 L763.8,108.4 L764.8,108.3 L765.7,108.2 L766.6,108.1 L767.6,108.0 L768.5,107.9 L769.4,107.8 L770.4,107.7 L771.3,107.6 L772.3,107.6 L773.2,107.5 L774.1,107.4 L775.1,107.3 L776.0,107.2 L777.3,97.0 L778.6,91.5 L780.0,93.9 L780.9,89.4 L781.9,89.1 L782.8,91.3 L783.9,92.2 L785.0,88.4 L786.0,88.6 L787.0,90.6 L788.0,89.7 L789.1,90.9 L790.2,92.2 L791.3,92.8 L793.0,100.0 L794.7,111.1 L795.6,111.1 L796.6,111.1 L797.5,111.1 L798.5,111.2 L799.4,111.2 L800.3,111.2 L801.3,111.2 L802.2,111.2 L803.2,111.2 L804.1,111.3 L805.0,111.3 L806.0,111.3 L806.9,111.3 L807.8,111.3 L808.8,111.4 L809.7,111.4 L810.7,111.4 L811.6,111.4 L813.0,102.6 L814.1,102.6 L815.3,102.6 L816.4,102.6 L817.6,111.4 L818.5,111.4 L819.4,111.4 L820.3,111.4 L821.3,111.4 L822.2,111.4 L823.1,111.4 L824.0,111.4 L824.9,111.4 L825.8,111.4 L826.8,111.4 L827.7,111.4 L828.6,111.4 L829.5,111.4 L830.4,111.4 L831.3,111.4 L832.2,111.4 L833.2,111.4 L834.1,111.4 L835.0,111.4 L835.9,111.4 L836.8,111.4 L837.7,111.4 L838.6,111.4 L839.6,111.4 L840.5,111.4 L841.4,111.4 L842.3,111.4 L843.2,111.4 L844.1,111.4 L845.1,111.4 L846.0,111.4 L846.9,111.4 L847.8,111.4 L848.7,111.4 L849.6,111.4 L850.5,111.4 L851.5,111.4 L852.4,111.4 L853.3,111.4 L854.2,111.4 L855.1,102.6 L856.4,102.6 L857.6,102.6 L858.5,111.4 L859.4,111.4 L860.3,111.4 L861.2,111.4 L862.1,111.4 L863.1,111.5 L864.0,111.5 L864.9,111.5 L865.8,111.5 L866.7,111.5 L867.6,111.5 L868.5,111.5 L869.5,111.5 L870.4,111.5 L871.3,111.5 L872.2,111.5 L873.1,111.6 L874.0,111.6 L874.9,111.6 L875.8,111.6 L876.8,111.6 L877.7,111.6 L878.6,111.6 L879.5,111.6 L880.4,111.6 L881.3,111.7 L882.2,111.7 L883.1,111.7 L884.0,111.7 L885.0,111.7 L885.9,111.7 L886.8,111.7 L887.7,111.7 L888.6,111.7 L889.5,111.7 L890.4,111.8 L891.4,111.8 L892.3,111.8 L893.2,111.8 L894.1,111.8 L895.0,111.8 L896.2,102.6 L897.2,102.6 L898.2,102.6 L899.2,102.6 L900.9,104.7 L902.6,96.6 L903.7,95.7 L904.9,96.0 L906.0,94.3 L907.1,91.9 L908.3,94.7 L909.4,92.2 L910.6,95.1 L911.9,95.5 L913.0,97.9 L914.0,95.7 L915.1,89.4 L916.2,87.7 L917.5,96.0 L918.7,102.3 L919.8,106.2 L921.0,106.6 L922.1,109.8 L923.0,113.1 L923.9,113.1 L924.8,113.1 L925.7,113.1 L926.6,113.1 L927.5,113.1 L928.4,113.1 L929.3,113.1 L930.2,113.1 L931.1,113.1 L932.0,113.1 L932.9,113.1 L933.8,113.1 L934.7,113.1 L935.6,113.1 L936.5,113.1 L937.9,103.3 L938.9,103.3 L939.8,103.3 L940.8,103.3 L942.5,113.1 L943.7,113.1 L944.7,75.8 L945.6,74.3 L946.5,70.5 L947.5,65.7 L948.4,64.0 L949.3,62.3 L951.0,65.7 L952.2,63.6 L953.5,63.5 L954.6,61.7 L955.8,63.5 L956.9,67.0 L958.0,63.4 L959.0,60.4 L960.0,62.8 L961.1,64.1 L962.8,66.4 L964.1,72.6 L965.4,80.6 L966.5,81.6 L967.7,82.3 L968.8,83.0 L969.7,83.0 L970.7,83.0 L971.6,83.0 L972.5,83.0 L973.5,83.0 L974.4,83.0 L975.3,83.0 L976.2,83.0 L977.2,83.0 L978.1,83.0 L979.3,74.1 L980.3,74.1 L981.4,74.1 L982.4,74.1 L984.1,82.6 L985.2,78.1 L986.4,74.9 L987.5,69.1 L988.8,62.6 L990.0,57.2 L991.2,49.0 L992.5,43.1 L994.2,56.5 L995.5,59.1 L996.8,58.4 L998.0,58.7 L999.3,60.5" fill="none" stroke="#f2cc0c" stroke-width="1.0" stroke-linejoin="round"/><path d="M709.8,114.0 L711.1,114.4 L712.4,114.8 L714.1,121.6 L715.2,121.0 L716.4,120.5 L717.5,119.9 L718.4,119.9 L719.3,119.9 L720.2,119.8 L721.2,119.8 L722.1,119.8 L723.0,119.8 L723.9,119.7 L724.8,119.7 L725.7,119.7 L726.7,119.7 L727.6,119.6 L728.5,119.6 L729.4,119.6 L730.2,111.4 L731.3,111.4 L732.5,111.4 L733.6,111.4 L734.4,119.1 L735.7,116.5 L737.0,115.2 L737.9,114.9 L738.8,112.3 L739.7,112.1 L740.7,113.8 L741.6,113.3 L742.5,112.9 L743.4,111.7 L744.3,112.2 L745.2,111.9 L746.2,111.6 L747.1,110.2 L748.0,110.7 L748.9,110.3 L750.0,110.3 L751.2,110.2 L752.3,109.2 L754.0,118.2 L754.9,118.2 L755.8,118.2 L756.8,118.2 L757.7,118.2 L758.6,118.2 L759.5,118.2 L760.4,118.2 L761.3,118.2 L762.2,118.2 L763.2,118.2 L764.1,118.2 L765.0,118.2 L765.9,118.2 L766.8,118.2 L767.8,118.2 L768.7,118.2 L769.6,118.2 L770.5,118.2 L771.4,118.2 L772.3,118.2 L773.2,118.2 L774.2,118.2 L775.1,118.2 L776.0,118.2 L777.0,113.6 L778.0,109.0 L779.0,108.8 L779.9,108.4 L780.9,107.9 L781.8,107.9 L782.8,109.1 L783.7,108.8 L784.6,109.0 L785.6,110.4 L786.5,109.5 L787.5,109.6 L788.4,108.8 L789.4,108.3 L790.3,109.2 L791.3,108.8 L793.0,119.9 L793.9,119.9 L794.9,119.9 L795.8,120.0 L796.7,120.0 L797.6,120.0 L798.6,120.0 L799.5,120.1 L800.4,120.1 L801.4,120.1 L802.3,120.1 L803.2,120.2 L804.1,120.2 L805.1,120.2 L806.0,120.2 L806.9,120.3 L807.9,120.3 L808.8,120.3 L809.7,120.3 L810.6,120.4 L811.6,120.4 L812.5,120.4 L814.2,111.4 L815.3,111.4 L816.4,111.4 L817.6,120.4 L818.5,120.4 L819.4,120.4 L820.3,120.4 L821.3,120.4 L822.2,120.5 L823.1,120.5 L824.0,120.5 L824.9,120.5 L825.8,120.5 L826.8,120.5 L827.7,120.5 L828.6,120.5 L829.5,120.5 L830.4,120.5 L831.3,120.5 L832.2,120.6 L833.2,120.6 L834.1,120.6 L835.0,120.6 L835.9,120.6 L836.8,120.6 L837.7,120.6 L838.6,120.6 L839.6,120.6 L840.5,120.7 L841.4,120.7 L842.3,120.7 L843.2,120.7 L844.1,120.7 L845.1,120.7 L846.0,120.7 L846.9,120.7 L847.8,120.7 L848.7,120.7 L849.6,120.8 L850.5,120.8 L851.5,120.8 L852.4,120.8 L853.3,120.8 L854.2,120.8 L855.4,111.4 L856.5,111.4 L857.6,111.4 L858.8,120.8 L859.7,120.8 L860.6,120.8 L861.5,120.8 L862.4,120.8 L863.3,120.8 L864.2,120.8 L865.1,120.8 L866.0,120.8 L866.9,120.8 L867.8,120.8 L868.7,120.8 L869.6,120.8 L870.5,120.8 L871.4,120.8 L872.3,120.8 L873.2,120.8 L874.1,120.8 L875.0,120.8 L875.9,120.8 L876.8,120.8 L877.8,120.8 L878.7,120.8 L879.6,120.8 L880.5,120.8 L881.4,120.8 L882.3,120.8 L883.2,120.8 L884.1,120.8 L885.0,120.8 L885.9,120.8 L886.8,120.8 L887.7,120.8 L888.6,120.8 L889.5,120.8 L890.4,120.8 L891.3,120.8 L892.2,120.8 L893.1,120.8 L894.0,120.8 L894.9,120.8 L895.8,120.8 L897.2,111.4 L898.4,111.4 L899.5,111.4 L900.9,114.8 L901.8,114.4 L902.8,115.3 L903.7,114.1 L904.7,112.5 L905.6,113.9 L906.6,113.3 L907.5,112.8 L908.5,112.8 L909.4,112.1 L910.2,108.0 L911.9,112.7 L913.0,112.3 L914.0,110.1 L915.1,105.9 L916.2,105.4 L917.5,110.3 L918.7,114.7 L919.6,120.8 L920.5,120.8 L921.5,120.8 L922.4,120.8 L923.3,120.8 L924.3,120.8 L925.2,120.8 L926.2,120.8 L927.1,120.8 L928.0,120.8 L929.0,120.8 L929.9,120.8 L930.8,120.8 L931.8,120.8 L932.7,120.8 L933.7,120.8 L934.6,120.8 L935.5,120.8 L936.5,120.8 L937.4,120.8 L938.6,113.1 L939.7,113.1 L940.8,113.1 L942.5,121.6 L944.2,121.6 L945.0,89.5 L946.0,87.3 L947.0,86.4 L948.1,83.3 L949.1,82.1 L950.1,78.8 L951.1,81.2 L952.1,82.3 L953.2,82.2 L954.2,83.5 L955.2,85.4 L956.2,84.2 L957.1,82.8 L958.1,81.4 L959.1,80.9 L960.1,81.2 L961.0,79.1 L962.0,80.3 L963.7,90.5 L964.8,92.7 L966.0,91.7 L967.1,92.8 L968.0,92.8 L968.9,92.8 L969.8,92.9 L970.8,92.9 L971.7,92.9 L972.6,92.9 L973.5,93.0 L974.4,93.0 L975.3,93.0 L976.3,93.0 L977.2,93.1 L978.1,93.1 L979.0,93.1 L980.3,84.3 L981.3,84.3 L982.4,84.3 L984.1,92.8 L985.1,91.2 L986.2,87.8 L987.2,84.6 L988.3,81.8 L989.3,79.0 L990.4,75.6 L991.5,71.7 L992.5,68.2 L994.2,80.9 L995.2,82.4 L996.2,81.9 L997.3,80.8 L998.3,83.1 L999.3,82.6 L999.3,124.5 L709.8,124.5 Z" fill="#8ab8ff" fill-opacity="0.12" stroke="none"/><path d="M709.8,114.0 L711.1,114.4 L712.4,114.8 L714.1,121.6 L715.2,121.0 L716.4,120.5 L717.5,119.9 L718.4,119.9 L719.3,119.9 L720.2,119.8 L721.2,119.8 L722.1,119.8 L723.0,119.8 L723.9,119.7 L724.8,119.7 L725.7,119.7 L726.7,119.7 L727.6,119.6 L728.5,119.6 L729.4,119.6 L730.2,111.4 L731.3,111.4 L732.5,111.4 L733.6,111.4 L734.4,119.1 L735.7,116.5 L737.0,115.2 L737.9,114.9 L738.8,112.3 L739.7,112.1 L740.7,113.8 L741.6,113.3 L742.5,112.9 L743.4,111.7 L744.3,112.2 L745.2,111.9 L746.2,111.6 L747.1,110.2 L748.0,110.7 L748.9,110.3 L750.0,110.3 L751.2,110.2 L752.3,109.2 L754.0,118.2 L754.9,118.2 L755.8,118.2 L756.8,118.2 L757.7,118.2 L758.6,118.2 L759.5,118.2 L760.4,118.2 L761.3,118.2 L762.2,118.2 L763.2,118.2 L764.1,118.2 L765.0,118.2 L765.9,118.2 L766.8,118.2 L767.8,118.2 L768.7,118.2 L769.6,118.2 L770.5,118.2 L771.4,118.2 L772.3,118.2 L773.2,118.2 L774.2,118.2 L775.1,118.2 L776.0,118.2 L777.0,113.6 L778.0,109.0 L779.0,108.8 L779.9,108.4 L780.9,107.9 L781.8,107.9 L782.8,109.1 L783.7,108.8 L784.6,109.0 L785.6,110.4 L786.5,109.5 L787.5,109.6 L788.4,108.8 L789.4,108.3 L790.3,109.2 L791.3,108.8 L793.0,119.9 L793.9,119.9 L794.9,119.9 L795.8,120.0 L796.7,120.0 L797.6,120.0 L798.6,120.0 L799.5,120.1 L800.4,120.1 L801.4,120.1 L802.3,120.1 L803.2,120.2 L804.1,120.2 L805.1,120.2 L806.0,120.2 L806.9,120.3 L807.9,120.3 L808.8,120.3 L809.7,120.3 L810.6,120.4 L811.6,120.4 L812.5,120.4 L814.2,111.4 L815.3,111.4 L816.4,111.4 L817.6,120.4 L818.5,120.4 L819.4,120.4 L820.3,120.4 L821.3,120.4 L822.2,120.5 L823.1,120.5 L824.0,120.5 L824.9,120.5 L825.8,120.5 L826.8,120.5 L827.7,120.5 L828.6,120.5 L829.5,120.5 L830.4,120.5 L831.3,120.5 L832.2,120.6 L833.2,120.6 L834.1,120.6 L835.0,120.6 L835.9,120.6 L836.8,120.6 L837.7,120.6 L838.6,120.6 L839.6,120.6 L840.5,120.7 L841.4,120.7 L842.3,120.7 L843.2,120.7 L844.1,120.7 L845.1,120.7 L846.0,120.7 L846.9,120.7 L847.8,120.7 L848.7,120.7 L849.6,120.8 L850.5,120.8 L851.5,120.8 L852.4,120.8 L853.3,120.8 L854.2,120.8 L855.4,111.4 L856.5,111.4 L857.6,111.4 L858.8,120.8 L859.7,120.8 L860.6,120.8 L861.5,120.8 L862.4,120.8 L863.3,120.8 L864.2,120.8 L865.1,120.8 L866.0,120.8 L866.9,120.8 L867.8,120.8 L868.7,120.8 L869.6,120.8 L870.5,120.8 L871.4,120.8 L872.3,120.8 L873.2,120.8 L874.1,120.8 L875.0,120.8 L875.9,120.8 L876.8,120.8 L877.8,120.8 L878.7,120.8 L879.6,120.8 L880.5,120.8 L881.4,120.8 L882.3,120.8 L883.2,120.8 L884.1,120.8 L885.0,120.8 L885.9,120.8 L886.8,120.8 L887.7,120.8 L888.6,120.8 L889.5,120.8 L890.4,120.8 L891.3,120.8 L892.2,120.8 L893.1,120.8 L894.0,120.8 L894.9,120.8 L895.8,120.8 L897.2,111.4 L898.4,111.4 L899.5,111.4 L900.9,114.8 L901.8,114.4 L902.8,115.3 L903.7,114.1 L904.7,112.5 L905.6,113.9 L906.6,113.3 L907.5,112.8 L908.5,112.8 L909.4,112.1 L910.2,108.0 L911.9,112.7 L913.0,112.3 L914.0,110.1 L915.1,105.9 L916.2,105.4 L917.5,110.3 L918.7,114.7 L919.6,120.8 L920.5,120.8 L921.5,120.8 L922.4,120.8 L923.3,120.8 L924.3,120.8 L925.2,120.8 L926.2,120.8 L927.1,120.8 L928.0,120.8 L929.0,120.8 L929.9,120.8 L930.8,120.8 L931.8,120.8 L932.7,120.8 L933.7,120.8 L934.6,120.8 L935.5,120.8 L936.5,120.8 L937.4,120.8 L938.6,113.1 L939.7,113.1 L940.8,113.1 L942.5,121.6 L944.2,121.6 L945.0,89.5 L946.0,87.3 L947.0,86.4 L948.1,83.3 L949.1,82.1 L950.1,78.8 L951.1,81.2 L952.1,82.3 L953.2,82.2 L954.2,83.5 L955.2,85.4 L956.2,84.2 L957.1,82.8 L958.1,81.4 L959.1,80.9 L960.1,81.2 L961.0,79.1 L962.0,80.3 L963.7,90.5 L964.8,92.7 L966.0,91.7 L967.1,92.8 L968.0,92.8 L968.9,92.8 L969.8,92.9 L970.8,92.9 L971.7,92.9 L972.6,92.9 L973.5,93.0 L974.4,93.0 L975.3,93.0 L976.3,93.0 L977.2,93.1 L978.1,93.1 L979.0,93.1 L980.3,84.3 L981.3,84.3 L982.4,84.3 L984.1,92.8 L985.1,91.2 L986.2,87.8 L987.2,84.6 L988.3,81.8 L989.3,79.0 L990.4,75.6 L991.5,71.7 L992.5,68.2 L994.2,80.9 L995.2,82.4 L996.2,81.9 L997.3,80.8 L998.3,83.1 L999.3,82.6" fill="none" stroke="#8ab8ff" stroke-width="0.9" stroke-linejoin="round"/><path d="M709.8,123.8 L915.5,123.8 L916.2,114.8 L916.9,123.8 L944.2,123.3 L944.7,103.0 L950.1,97.0 L953.5,96.2 L956.0,101.3 L958.6,97.0 L962.0,93.6 L963.7,97.0 L985.8,97.0 L988.3,99.6 L990.8,95.3 L994.2,99.6 L999.3,101.3 L999.3,124.5 L709.8,124.5 Z" fill="#ff9830" fill-opacity="0.14" stroke="none"/><path d="M709.8,123.8 L915.5,123.8 L916.2,114.8 L916.9,123.8 L944.2,123.3 L944.7,103.0 L950.1,97.0 L953.5,96.2 L956.0,101.3 L958.6,97.0 L962.0,93.6 L963.7,97.0 L985.8,97.0 L988.3,99.6 L990.8,95.3 L994.2,99.6 L999.3,101.3" fill="none" stroke="#ff9830" stroke-width="0.9" stroke-linejoin="round"/><path d="M709.8,124.4 L710.8,124.4 L711.8,124.5 L712.8,124.6 L713.8,124.4 L714.8,124.6 L715.8,124.0 L716.8,124.3 L717.8,124.6 L718.8,124.4 L719.8,124.5 L720.8,124.1 L721.8,124.3 L722.8,124.1 L723.8,124.3 L724.8,124.3 L725.8,124.0 L726.8,124.1 L727.8,124.2 L728.8,124.5 L729.8,124.5 L730.8,124.1 L731.8,124.5 L732.8,124.1 L733.8,124.4 L734.8,124.1 L735.8,124.0 L736.8,124.5 L737.8,124.1 L738.8,124.1 L739.8,124.6 L740.8,124.5 L741.8,124.2 L742.8,124.6 L743.8,124.3 L744.8,124.4 L745.8,124.1 L746.8,124.6 L747.8,124.4 L748.8,124.6 L749.8,124.5 L750.8,124.2 L751.8,124.2 L752.8,124.1 L753.8,124.1 L754.8,124.0 L755.8,124.2 L756.8,124.4 L757.8,124.0 L758.8,124.4 L759.8,124.2 L760.8,124.2 L761.8,124.5 L762.8,124.3 L763.8,124.2 L764.8,124.3 L765.8,124.4 L766.8,124.0 L767.8,124.6 L768.8,124.0 L769.8,124.4 L770.8,124.5 L771.8,124.0 L772.8,124.5 L773.8,124.2 L774.8,124.3 L775.8,124.0 L776.8,124.0 L777.8,124.1 L778.8,124.6 L779.8,124.1 L780.8,124.5 L781.8,124.6 L782.8,124.6 L783.8,124.2 L784.8,124.2 L785.8,124.3 L786.8,124.5 L787.8,124.1 L788.8,124.4 L789.8,124.5 L790.8,124.5 L791.8,124.0 L792.8,124.6 L793.8,124.1 L794.8,124.2 L795.8,124.4 L796.8,124.6 L797.8,124.2 L798.8,124.6 L799.8,124.3 L800.8,124.2 L801.8,124.2 L802.8,124.1 L803.8,124.0 L804.8,124.1 L805.8,124.4 L806.8,124.6 L807.8,124.1 L808.8,124.0 L809.8,124.6 L810.8,124.3 L811.8,124.2 L812.8,124.1 L813.8,124.4 L814.8,124.5 L815.8,124.3 L816.8,124.3 L817.8,124.0 L818.8,124.5 L819.8,124.0 L820.8,124.3 L821.8,124.5 L822.8,124.1 L823.8,124.4 L824.8,124.6 L825.8,124.4 L826.8,124.5 L827.8,124.1 L828.8,124.3 L829.8,124.1 L830.8,124.5 L831.8,124.2 L832.8,124.3 L833.8,124.6 L834.8,124.5 L835.8,124.6 L836.8,124.3 L837.8,124.3 L838.8,124.4 L839.8,124.3 L840.8,124.2 L841.8,124.2 L842.8,124.1 L843.8,124.2 L844.8,124.6 L845.8,124.6 L846.8,124.4 L847.8,124.3 L848.8,124.2 L849.8,124.1 L850.8,124.2 L851.8,124.5 L852.8,124.5 L853.8,124.2 L854.8,124.5 L855.8,124.5 L856.8,124.4 L857.8,124.4 L858.8,124.5 L859.8,124.2 L860.8,124.4 L861.8,124.2 L862.8,124.3 L863.8,124.5 L864.8,124.4 L865.8,124.2 L866.8,124.6 L867.8,124.4 L868.8,124.3 L869.8,124.0 L870.8,124.3 L871.8,124.2 L872.8,124.4 L873.8,124.3 L874.8,124.5 L875.8,124.4 L876.8,124.5 L877.8,124.2 L878.8,124.4 L879.8,124.4 L880.8,124.5 L881.8,124.2 L882.8,124.5 L883.8,124.5 L884.8,124.4 L885.8,124.6 L886.8,124.6 L887.8,124.3 L888.8,124.3 L889.8,124.1 L890.8,124.5 L891.8,124.6 L892.8,124.3 L893.8,124.4 L894.8,124.4 L895.8,124.4 L896.8,124.1 L897.8,124.5 L898.8,124.3 L899.8,124.4 L900.8,124.3 L901.8,124.4 L902.8,124.5 L903.8,124.4 L904.8,124.4 L905.8,124.0 L906.8,124.1 L907.8,124.3 L908.8,124.4 L909.8,124.1 L910.8,124.4 L911.8,124.4 L912.8,124.0 L913.8,124.3 L914.8,124.1 L915.8,124.0 L916.8,124.1 L917.8,124.2 L918.8,124.1 L919.8,124.1 L920.8,124.0 L921.8,124.3 L922.8,124.2 L923.8,124.4 L924.8,124.4 L925.8,124.1 L926.8,124.5 L927.8,124.0 L928.8,124.2 L929.8,124.2 L930.8,124.2 L931.8,124.1 L932.8,124.5 L933.8,124.2 L934.8,124.0 L935.8,124.4 L936.8,124.1 L937.8,124.3 L938.8,124.2 L939.8,124.3 L940.8,124.6 L941.8,124.5 L942.8,124.3 L943.8,124.5 L944.8,124.4 L945.8,124.2 L946.8,124.1 L947.8,124.4 L948.8,124.3 L949.8,124.6 L950.8,124.6 L951.8,124.4 L952.8,124.2 L953.8,124.5 L954.8,124.0 L955.8,124.1 L956.8,124.3 L957.8,124.4 L958.8,124.1 L959.8,124.4 L960.8,124.5 L961.8,124.2 L962.8,124.3 L963.8,124.1 L964.8,124.2 L965.8,124.6 L966.8,124.2 L967.8,124.6 L968.8,124.5 L969.8,124.4 L970.8,124.2 L971.8,124.6 L972.8,124.3 L973.8,124.2 L974.8,124.2 L975.8,124.6 L976.8,124.3 L977.8,124.2 L978.8,124.3 L979.8,124.1 L980.8,124.4 L981.8,124.3 L982.8,124.2 L983.8,124.5 L984.8,124.5 L985.8,124.0 L986.8,124.3 L987.8,124.2 L988.8,124.6 L989.8,124.5 L990.8,124.1 L991.8,124.2 L992.8,124.1 L993.8,124.6 L994.8,124.2 L995.8,124.4 L996.8,124.3 L997.8,124.4 L998.8,124.4" fill="none" stroke="#e0626e" stroke-width="0.8" stroke-linejoin="round"/><path d="M709.8,123.6 L710.8,123.6 L711.8,123.2 L712.8,122.9 L713.8,122.6 L714.8,123.4 L715.8,123.2 L716.8,123.5 L717.8,123.0 L718.8,123.5 L719.8,122.9 L720.8,123.6 L721.8,123.5 L722.8,123.1 L723.8,123.2 L724.8,123.4 L725.8,122.8 L726.8,123.3 L727.8,123.6 L728.8,122.9 L729.8,123.6 L730.8,123.4 L731.8,123.6 L732.8,123.0 L733.8,122.7 L734.8,123.6 L735.8,123.6 L736.8,123.1 L737.8,121.9 L738.8,122.0 L739.8,122.6 L740.8,122.1 L741.8,122.9 L742.8,122.5 L743.8,122.0 L744.8,122.6 L745.8,122.2 L746.8,122.9 L747.8,122.9 L748.8,122.4 L749.8,122.6 L750.8,122.6 L751.8,122.8 L752.8,123.0 L753.8,121.8 L754.8,122.2 L755.8,123.3 L756.8,123.0 L757.8,123.3 L758.8,122.7 L759.8,123.7 L760.8,123.2 L761.8,122.7 L762.8,123.4 L763.8,123.0 L764.8,122.8 L765.8,123.2 L766.8,122.8 L767.8,122.9 L768.8,123.6 L769.8,123.4 L770.8,122.6 L771.8,123.5 L772.8,122.6 L773.8,123.0 L774.8,123.7 L775.8,123.3 L776.8,123.0 L777.8,123.1 L778.8,123.1 L779.8,122.8 L780.8,123.8 L781.8,122.7 L782.8,123.1 L783.8,123.5 L784.8,123.1 L785.8,123.8 L786.8,122.9 L787.8,123.8 L788.8,123.7 L789.8,123.4 L790.8,123.7 L791.8,123.1 L792.8,123.6 L793.8,123.6 L794.8,123.2 L795.8,123.2 L796.8,123.4 L797.8,123.1 L798.8,122.7 L799.8,123.5 L800.8,122.9 L801.8,123.2 L802.8,123.5 L803.8,122.8 L804.8,122.6 L805.8,122.7 L806.8,123.3 L807.8,123.0 L808.8,122.9 L809.8,123.1 L810.8,123.7 L811.8,122.9 L812.8,123.1 L813.8,123.7 L814.8,123.3 L815.8,122.9 L816.8,123.2 L817.8,123.2 L818.8,122.8 L819.8,123.1 L820.8,123.0 L821.8,123.6 L822.8,123.0 L823.8,123.4 L824.8,123.8 L825.8,123.7 L826.8,123.1 L827.8,123.3 L828.8,123.0 L829.8,123.1 L830.8,123.2 L831.8,123.6 L832.8,123.7 L833.8,122.9 L834.8,122.6 L835.8,123.1 L836.8,122.7 L837.8,122.6 L838.8,123.5 L839.8,122.7 L840.8,123.5 L841.8,123.0 L842.8,123.7 L843.8,123.6 L844.8,122.7 L845.8,122.8 L846.8,123.7 L847.8,123.3 L848.8,123.1 L849.8,123.5 L850.8,123.6 L851.8,123.2 L852.8,123.2 L853.8,122.7 L854.8,123.0 L855.8,122.8 L856.8,123.4 L857.8,123.3 L858.8,122.8 L859.8,123.4 L860.8,122.7 L861.8,122.7 L862.8,123.4 L863.8,123.2 L864.8,123.7 L865.8,123.4 L866.8,123.4 L867.8,122.8 L868.8,123.6 L869.8,122.7 L870.8,123.3 L871.8,123.7 L872.8,123.7 L873.8,123.7 L874.8,123.1 L875.8,123.4 L876.8,123.5 L877.8,122.8 L878.8,123.7 L879.8,123.7 L880.8,123.1 L881.8,123.5 L882.8,123.1 L883.8,122.9 L884.8,123.5 L885.8,122.7 L886.8,123.6 L887.8,123.8 L888.8,122.9 L889.8,123.7 L890.8,122.7 L891.8,123.6 L892.8,122.9 L893.8,123.8 L894.8,123.1 L895.8,123.7 L896.8,122.6 L897.8,122.7 L898.8,123.6 L899.8,123.4 L900.8,123.2 L901.8,122.6 L902.8,122.8 L903.8,123.0 L904.8,122.7 L905.8,123.8 L906.8,123.5 L907.8,123.7 L908.8,123.4 L909.8,123.0 L910.8,122.7 L911.8,123.5 L912.8,122.7 L913.8,123.3 L914.8,123.2 L915.8,123.2 L916.8,122.7 L917.8,122.7 L918.8,123.2 L919.8,122.6 L920.8,123.2 L921.8,122.8 L922.8,122.9 L923.8,122.8 L924.8,123.3 L925.8,123.1 L926.8,122.9 L927.8,122.9 L928.8,123.3 L929.8,123.7 L930.8,123.1 L931.8,122.8 L932.8,123.0 L933.8,122.9 L934.8,123.3 L935.8,123.5 L936.8,123.3 L937.8,122.8 L938.8,123.0 L939.8,123.1 L940.8,123.1 L941.8,123.1 L942.8,123.8 L943.8,123.3 L944.8,123.4 L945.8,123.0 L946.8,122.9 L947.8,123.1 L948.8,122.5 L949.8,122.9 L950.8,123.3 L951.8,122.3 L952.8,122.9 L953.8,122.6 L954.8,122.2 L955.8,122.1 L956.8,123.0 L957.8,122.2 L958.8,123.0 L959.8,122.2 L960.8,122.5 L961.8,122.1 L962.8,122.8 L963.8,123.0 L964.8,122.4 L965.8,122.8 L966.8,123.2 L967.8,122.5 L968.8,122.7 L969.8,123.0 L970.8,123.1 L971.8,122.3 L972.8,122.9 L973.8,122.2 L974.8,122.2 L975.8,123.3 L976.8,122.2 L977.8,123.2 L978.8,123.0 L979.8,122.9 L980.8,123.0 L981.8,122.9 L982.8,122.4 L983.8,122.6 L984.8,122.3 L985.8,123.1 L986.8,123.0 L987.8,123.0 L988.8,122.4 L989.8,122.8 L990.8,122.4 L991.8,123.0 L992.8,123.0 L993.8,123.3 L994.8,122.9 L995.8,122.9 L996.8,123.0 L997.8,122.2 L998.8,122.8" fill="none" stroke="#37872d" stroke-width="0.8" stroke-linejoin="round"/><path d="M709.8,122.6 L710.8,122.5 L711.8,123.0 L712.8,122.4 L713.8,122.8 L714.8,122.7 L715.8,122.4 L716.8,122.8 L717.8,122.3 L718.8,122.7 L719.8,122.4 L720.8,122.4 L721.8,122.7 L722.8,123.1 L723.8,122.4 L724.8,122.5 L725.8,122.9 L726.8,123.2 L727.8,122.9 L728.8,122.7 L729.8,123.3 L730.8,122.3 L731.8,123.2 L732.8,122.6 L733.8,122.4 L734.8,122.4 L735.8,119.6 L736.8,120.1 L737.8,119.5 L738.8,119.9 L739.8,119.9 L740.8,119.7 L741.8,119.8 L742.8,119.4 L743.8,119.4 L744.8,119.5 L745.8,120.0 L746.8,119.7 L747.8,119.6 L748.8,119.9 L749.8,119.8 L750.8,119.6 L751.8,120.1 L752.8,120.0 L753.8,119.5 L754.8,119.9 L755.8,119.8 L756.8,123.2 L757.8,123.0 L758.8,122.6 L759.8,123.3 L760.8,122.4 L761.8,122.7 L762.8,123.1 L763.8,122.5 L764.8,122.8 L765.8,122.3 L766.8,123.0 L767.8,123.1 L768.8,122.9 L769.8,123.2 L770.8,122.6 L771.8,123.0 L772.8,122.9 L773.8,122.9 L774.8,122.8 L775.8,123.1 L776.8,123.2 L777.8,122.8 L778.8,121.0 L779.8,120.4 L780.8,121.0 L781.8,120.9 L782.8,121.3 L783.8,121.1 L784.8,120.6 L785.8,120.7 L786.8,121.0 L787.8,120.3 L788.8,120.8 L789.8,120.5 L790.8,120.4 L791.8,120.4 L792.8,121.1 L793.8,122.4 L794.8,122.5 L795.8,122.7 L796.8,123.2 L797.8,122.4 L798.8,122.7 L799.8,122.8 L800.8,123.2 L801.8,123.1 L802.8,123.2 L803.8,122.6 L804.8,122.7 L805.8,122.7 L806.8,123.2 L807.8,123.3 L808.8,122.5 L809.8,122.5 L810.8,122.5 L811.8,122.5 L812.8,122.8 L813.8,122.9 L814.8,122.6 L815.8,122.3 L816.8,122.7 L817.8,122.7 L818.8,122.9 L819.8,123.3 L820.8,123.0 L821.8,122.8 L822.8,122.9 L823.8,123.0 L824.8,122.4 L825.8,123.2 L826.8,123.1 L827.8,123.2 L828.8,123.1 L829.8,122.7 L830.8,122.7 L831.8,122.4 L832.8,122.9 L833.8,122.4 L834.8,122.4 L835.8,122.5 L836.8,122.5 L837.8,122.6 L838.8,122.4 L839.8,122.3 L840.8,122.5 L841.8,122.4 L842.8,122.7 L843.8,122.3 L844.8,123.2 L845.8,122.9 L846.8,122.4 L847.8,122.6 L848.8,122.6 L849.8,122.7 L850.8,122.4 L851.8,123.1 L852.8,123.3 L853.8,122.8 L854.8,122.8 L855.8,122.4 L856.8,122.4 L857.8,122.6 L858.8,122.6 L859.8,123.1 L860.8,122.5 L861.8,122.3 L862.8,123.3 L863.8,122.8 L864.8,122.4 L865.8,122.8 L866.8,122.3 L867.8,122.8 L868.8,123.3 L869.8,123.2 L870.8,123.0 L871.8,122.6 L872.8,122.7 L873.8,122.5 L874.8,123.1 L875.8,122.8 L876.8,123.1 L877.8,122.6 L878.8,122.5 L879.8,123.1 L880.8,123.3 L881.8,123.2 L882.8,123.1 L883.8,123.1 L884.8,123.0 L885.8,122.5 L886.8,122.8 L887.8,122.7 L888.8,122.3 L889.8,122.3 L890.8,122.6 L891.8,122.6 L892.8,123.0 L893.8,123.3 L894.8,122.7 L895.8,123.2 L896.8,123.3 L897.8,123.3 L898.8,122.7 L899.8,122.5 L900.8,122.5 L901.8,122.5 L902.8,122.5 L903.8,122.9 L904.8,123.2 L905.8,123.1 L906.8,122.8 L907.8,123.0 L908.8,123.1 L909.8,122.4 L910.8,123.0 L911.8,123.2 L912.8,123.1 L913.8,123.1 L914.8,122.8 L915.8,122.5 L916.8,123.1 L917.8,122.6 L918.8,123.1 L919.8,123.3 L920.8,122.7 L921.8,122.7 L922.8,123.2 L923.8,123.0 L924.8,122.5 L925.8,122.4 L926.8,122.5 L927.8,123.2 L928.8,123.1 L929.8,122.4 L930.8,123.1 L931.8,123.3 L932.8,123.0 L933.8,122.7 L934.8,122.8 L935.8,122.4 L936.8,122.3 L937.8,123.3 L938.8,122.9 L939.8,122.8 L940.8,123.2 L941.8,122.7 L942.8,123.2 L943.8,123.1 L944.8,121.0 L945.8,121.1 L946.8,121.1 L947.8,121.0 L948.8,121.4 L949.8,121.1 L950.8,121.2 L951.8,120.9 L952.8,121.7 L953.8,121.2 L954.8,121.3 L955.8,121.4 L956.8,121.7 L957.8,121.2 L958.8,121.7 L959.8,121.3 L960.8,121.3 L961.8,121.3 L962.8,120.8 L963.8,121.2 L964.8,121.0 L965.8,120.8 L966.8,121.6 L967.8,121.0 L968.8,121.3 L969.8,121.5 L970.8,121.4 L971.8,121.1 L972.8,121.3 L973.8,121.4 L974.8,121.6 L975.8,118.9 L976.8,119.4 L977.8,119.0 L978.8,119.1 L979.8,119.6 L980.8,119.3 L981.8,119.4 L982.8,119.6 L983.8,119.7 L984.8,119.2 L985.8,119.4 L986.8,119.3 L987.8,119.3 L988.8,119.5 L989.8,119.3 L990.8,119.3 L991.8,119.3 L992.8,119.7 L993.8,119.5 L994.8,119.7 L995.8,119.7 L996.8,119.1 L997.8,119.4 L998.8,119.7" fill="none" stroke="#ca95e5" stroke-width="0.8" stroke-linejoin="round"/><path d="M709.8,122.7 L710.8,123.5 L711.8,122.6 L712.8,123.2 L713.8,122.6 L714.8,122.7 L715.8,123.5 L716.8,122.7 L717.8,123.1 L718.8,123.0 L719.8,123.0 L720.8,123.0 L721.8,122.7 L722.8,123.3 L723.8,122.6 L724.8,122.7 L725.8,122.5 L726.8,122.8 L727.8,122.9 L728.8,123.4 L729.8,122.9 L730.8,122.6 L731.8,122.8 L732.8,123.5 L733.8,122.6 L734.8,123.1 L735.8,122.9 L736.8,123.2 L737.8,121.6 L738.8,122.0 L739.8,121.8 L740.8,121.9 L741.8,122.2 L742.8,121.9 L743.8,121.4 L744.8,121.4 L745.8,122.2 L746.8,121.8 L747.8,121.5 L748.8,122.2 L749.8,121.9 L750.8,122.0 L751.8,122.2 L752.8,121.6 L753.8,121.7 L754.8,122.2 L755.8,121.4 L756.8,122.1 L757.8,121.4 L758.8,122.0 L759.8,122.0 L760.8,123.4 L761.8,123.3 L762.8,123.0 L763.8,122.7 L764.8,122.7 L765.8,123.0 L766.8,123.0 L767.8,122.6 L768.8,123.4 L769.8,123.0 L770.8,123.2 L771.8,122.7 L772.8,122.7 L773.8,122.5 L774.8,122.8 L775.8,122.8 L776.8,122.9 L777.8,122.9 L778.8,123.3 L779.8,123.4 L780.8,122.7 L781.8,122.9 L782.8,122.7 L783.8,123.2 L784.8,123.5 L785.8,122.7 L786.8,123.3 L787.8,122.8 L788.8,122.5 L789.8,123.3 L790.8,122.8 L791.8,122.7 L792.8,122.9 L793.8,122.7 L794.8,122.9 L795.8,122.9 L796.8,122.9 L797.8,123.1 L798.8,122.8 L799.8,122.6 L800.8,122.6 L801.8,122.6 L802.8,123.0 L803.8,122.9 L804.8,123.3 L805.8,123.0 L806.8,123.2 L807.8,123.5 L808.8,122.6 L809.8,122.5 L810.8,122.6 L811.8,122.9 L812.8,123.1 L813.8,123.2 L814.8,122.9 L815.8,123.5 L816.8,122.5 L817.8,123.3 L818.8,122.7 L819.8,123.4 L820.8,122.5 L821.8,123.5 L822.8,123.3 L823.8,123.5 L824.8,123.1 L825.8,122.7 L826.8,123.5 L827.8,122.9 L828.8,122.6 L829.8,123.1 L830.8,123.0 L831.8,123.0 L832.8,122.7 L833.8,122.6 L834.8,123.1 L835.8,123.0 L836.8,122.6 L837.8,122.9 L838.8,123.2 L839.8,123.2 L840.8,123.0 L841.8,122.9 L842.8,122.9 L843.8,122.7 L844.8,122.7 L845.8,122.9 L846.8,122.6 L847.8,123.2 L848.8,123.2 L849.8,123.1 L850.8,122.5 L851.8,122.9 L852.8,122.9 L853.8,122.6 L854.8,123.5 L855.8,123.3 L856.8,123.0 L857.8,123.2 L858.8,122.7 L859.8,122.7 L860.8,123.0 L861.8,123.2 L862.8,123.1 L863.8,122.5 L864.8,123.1 L865.8,123.4 L866.8,123.2 L867.8,123.4 L868.8,123.5 L869.8,122.7 L870.8,122.8 L871.8,123.0 L872.8,123.5 L873.8,122.9 L874.8,123.4 L875.8,123.4 L876.8,123.0 L877.8,123.1 L878.8,123.5 L879.8,123.3 L880.8,122.8 L881.8,123.3 L882.8,122.7 L883.8,122.9 L884.8,123.5 L885.8,123.3 L886.8,122.8 L887.8,122.8 L888.8,123.1 L889.8,123.3 L890.8,123.2 L891.8,123.4 L892.8,123.2 L893.8,123.3 L894.8,123.1 L895.8,122.9 L896.8,122.9 L897.8,123.0 L898.8,123.0 L899.8,123.3 L900.8,121.8 L901.8,121.6 L902.8,122.2 L903.8,121.8 L904.8,121.9 L905.8,121.6 L906.8,122.3 L907.8,121.8 L908.8,121.8 L909.8,122.3 L910.8,122.0 L911.8,121.8 L912.8,122.4 L913.8,121.9 L914.8,121.9 L915.8,122.5 L916.8,122.3 L917.8,122.2 L918.8,121.7 L919.8,122.3 L920.8,123.1 L921.8,123.3 L922.8,122.9 L923.8,123.3 L924.8,123.3 L925.8,122.9 L926.8,123.2 L927.8,123.3 L928.8,123.5 L929.8,123.4 L930.8,123.3 L931.8,122.6 L932.8,123.1 L933.8,123.2 L934.8,122.6 L935.8,123.0 L936.8,123.4 L937.8,123.4 L938.8,123.4 L939.8,122.6 L940.8,123.1 L941.8,123.4 L942.8,123.2 L943.8,122.8 L944.8,122.5 L945.8,123.4 L946.8,123.4 L947.8,123.2 L948.8,122.9 L949.8,123.3 L950.8,123.3 L951.8,123.2 L952.8,123.1 L953.8,122.8 L954.8,122.8 L955.8,122.9 L956.8,122.8 L957.8,123.0 L958.8,122.6 L959.8,123.2 L960.8,122.8 L961.8,122.7 L962.8,122.8 L963.8,122.9 L964.8,122.9 L965.8,123.3 L966.8,122.6 L967.8,122.7 L968.8,122.8 L969.8,122.7 L970.8,123.2 L971.8,122.6 L972.8,122.6 L973.8,123.1 L974.8,123.2 L975.8,123.3 L976.8,123.1 L977.8,122.8 L978.8,123.4 L979.8,123.2 L980.8,123.0 L981.8,123.1 L982.8,123.4 L983.8,123.5 L984.8,123.4 L985.8,122.6 L986.8,122.8 L987.8,122.9 L988.8,122.7 L989.8,123.3 L990.8,122.6 L991.8,123.4 L992.8,123.1 L993.8,123.1 L994.8,122.9 L995.8,123.4 L996.8,123.1 L997.8,123.4 L998.8,123.4" fill="none" stroke="#73bf69" stroke-width="0.8" stroke-linejoin="round"/></svg>
<div class="t ax" style="right:315.4px;top:48.1px">40 kW</div>
<div class="t ax" style="right:315.4px;top:66.2px">30 kW</div>
<div class="t ax" style="right:315.4px;top:84.3px">20 kW</div>
<div class="t ax" style="right:315.4px;top:102.4px">10 kW</div>
<div class="t ax" style="right:315.4px;top:120.5px">0 W</div>
<div class="t ax" style="left:709.8px;width:30px;text-align:center;top:128.3px">22-09</div>
<div class="t ax" style="left:792.6px;width:30px;text-align:center;top:128.3px">24-09</div>
<div class="t ax" style="left:875.7px;width:30px;text-align:center;top:128.3px">26-09</div>
<div class="t ax" style="left:958.5px;width:30px;text-align:center;top:128.3px">28-09</div>
<div class="t lg2" style="left:695.3px;top:138.5px"><i style="background:#73bf69"></i>Demohaus</div>
<div class="t lg2" style="left:744.3px;top:138.5px"><i style="background:#fade2a"></i>FuE Gebäude</div>
<div class="t lg2" style="left:800px;top:138.5px"><i style="background:#8ab8ff"></i>IFT Halle</div>
<div class="t lg2" style="left:844px;top:138.5px"><i style="background:#ff9830"></i>IFT Gebläse</div>
<div class="t lg2" style="left:895.8px;top:138.5px"><i style="background:#f2495c"></i>BGT-Box 1</div>
<div class="t lg2" style="left:943.2px;top:138.5px"><i style="background:#5794f2"></i>BGT-Box 2</div>
<div class="t lg2" style="left:695.3px;top:151.1px"><i style="background:#ca95e5"></i>Büro OG</div>
<div class="t lg2" style="left:736.8px;top:151.1px"><i style="background:#8f73d0"></i>Büro EG</div>
<div class="t lg2" style="left:777px;top:151.1px"><i style="background:#37872d"></i>Klimaanlage FuE</div>
<svg style="position:absolute;left:681.5px;top:169.5px" width="17" height="17"><polygon points="0,0 16.5,0 0,16.5" fill="#262a33"/><text x="2.9" y="7.0" font-size="6.5" font-weight="bold" fill="#d8d9e3" font-family="Liberation Sans">i</text></svg>
<div class="ttl" style="left:749.5px;width:200px;top:174.5px">Brennwert (Gasübergabestation)</div>
<svg style="position:absolute;left:681px;top:169px" width="337" height="139" viewBox="681 169 337 139"><line x1="704.5" y1="220.8" x2="1000" y2="220.8" stroke="#2a2d33" stroke-width="0.7"/><line x1="704.5" y1="247.5" x2="1000" y2="247.5" stroke="#2a2d33" stroke-width="0.7"/><line x1="704.5" y1="274" x2="1000" y2="274" stroke="#2a2d33" stroke-width="0.7"/><line x1="720" y1="200.5" x2="720" y2="280" stroke="#2a2d33" stroke-width="0.7"/><line x1="803.8" y1="200.5" x2="803.8" y2="280" stroke="#2a2d33" stroke-width="0.7"/><line x1="888" y1="200.5" x2="888" y2="280" stroke="#2a2d33" stroke-width="0.7"/><line x1="972.6" y1="200.5" x2="972.6" y2="280" stroke="#2a2d33" stroke-width="0.7"/><path d="M704.8,246.2 L706.1,235.0 L708.8,236.0 L713.9,239.4 L722.3,241.1 L725.7,242.1 L732.5,248.9 L737.6,251.2 L740.3,248.5 L742.6,252.3 L759.5,252.9 L769.7,254.6 L774.8,256.3 L779.8,259.7 L783.2,263.7 L785.9,262.4 L791.7,264.8 L803.5,265.8 L823.8,264.8 L825.5,254.6 L827.2,264.8 L837.3,263.7 L860.9,261.4 L881.3,261.4 L898.2,263.1 L903.3,261.4 L908.3,264.8 L911.7,266.5 L916.8,265.8 L921.9,254.6 L925.2,246.2 L928.6,243.5 L934.4,243.5 L934.9,271.0 L935.6,244.0 L938.8,247.9 L942.2,250.2 L943.9,246.2 L947.2,232.6 L950.6,227.6 L955.7,217.4 L959.1,217.4 L964.2,220.8 L968.6,220.8 L969.2,269.8 L969.8,220.0 L972.6,217.4 L979.4,219.1 L984.4,222.5 L989.5,220.8 L992.2,212.3 L994.6,220.8 L997.8,220.8 L998.0,259.7 L998.4,222.0 L999.0,222.5" fill="none" stroke="#73bf69" stroke-width="0.9" stroke-linejoin="round"/><path d="M704.8,251.2 L708.8,249.5 L713.9,245.5 L722.3,244.5 L729.1,242.1 L734.2,237.7 L739.3,245.5 L746.0,244.5 L759.5,241.1 L773.1,237.7 L778.1,239.4 L783.2,246.2 L784.9,264.8 L786.6,246.2 L791.7,246.9 L793.4,264.8 L795.1,246.2 L810.3,246.2 L820.4,248.9 L825.5,253.6 L844.1,256.3 L847.5,261.4 L849.2,258.0 L860.9,259.0 L864.4,263.1 L894.8,264.8 L911.7,268.1 L921.9,269.8 L928.6,270.5 L930.3,243.5 L932.0,270.5 L945.5,268.1 L965.8,272.5 L972.6,269.8 L974.3,217.4 L976.0,269.8 L986.1,263.1 L991.2,261.4 L992.9,209.0 L994.6,261.4 L999.0,260.4" fill="none" stroke="#f2cc0c" stroke-width="0.9" stroke-linejoin="round"/></svg>
<div class="t ax" style="right:319.4px;top:216.8px">11.7</div>
<div class="t ax" style="right:319.4px;top:243.5px">11.6</div>
<div class="t ax" style="right:319.4px;top:270.0px">11.6</div>
<div class="t ax" style="left:705px;width:30px;text-align:center;top:282.7px">22-09</div>
<div class="t ax" style="left:788.8px;width:30px;text-align:center;top:282.7px">24-09</div>
<div class="t ax" style="left:873px;width:30px;text-align:center;top:282.7px">26-09</div>
<div class="t ax" style="left:957.6px;width:30px;text-align:center;top:282.7px">28-09</div>
<div class="t lg2" style="left:695.3px;top:293.4px"><i style="background:#73bf69"></i>Brennwert [kWh/m3] (Stream 1)</div>
<div class="t lg2" style="left:806.2px;top:293.4px"><i style="background:#fade2a"></i>Brennwert [kWh/m3] (Stream 0)</div>
<svg style="position:absolute;left:681.5px;top:312.5px" width="17" height="17"><polygon points="0,0 16.5,0 0,16.5" fill="#262a33"/><text x="2.9" y="7.0" font-size="6.5" font-weight="bold" fill="#d8d9e3" font-family="Liberation Sans">i</text></svg>
<div class="ttl" style="left:749.5px;width:200px;top:317.5px">Wetter und Luftqualität</div>
<svg style="position:absolute;left:681px;top:312px" width="337" height="140" viewBox="681 312 337 140"><line x1="699" y1="356.4" x2="1000" y2="356.4" stroke="#2a2d33" stroke-width="0.7"/><line x1="699" y1="372.9" x2="1000" y2="372.9" stroke="#2a2d33" stroke-width="0.7"/><line x1="699" y1="389.5" x2="1000" y2="389.5" stroke="#2a2d33" stroke-width="0.7"/><line x1="699" y1="406" x2="1000" y2="406" stroke="#2a2d33" stroke-width="0.7"/><line x1="699" y1="423" x2="1000" y2="423" stroke="#2a2d33" stroke-width="0.7"/><line x1="714.6" y1="341.8" x2="714.6" y2="424" stroke="#2a2d33" stroke-width="0.7"/><line x1="800.8" y1="341.8" x2="800.8" y2="424" stroke="#2a2d33" stroke-width="0.7"/><line x1="886.4" y1="341.8" x2="886.4" y2="424" stroke="#2a2d33" stroke-width="0.7"/><line x1="972.6" y1="341.8" x2="972.6" y2="424" stroke="#2a2d33" stroke-width="0.7"/><path d="M700.4,376.4 L703.0,376.4 L705.6,373.1 L708.2,373.1 L710.8,369.7 L713.4,369.7 L716.0,366.4 L718.6,366.4 L721.2,366.4 L723.8,366.4 L726.4,366.4 L729.0,366.4 L731.6,366.4 L734.2,366.4 L736.8,363.1 L739.4,363.1 L742.0,363.1 L744.6,363.1 L747.2,366.4 L749.8,366.4 L752.4,366.4 L755.0,369.7 L757.6,373.1 L760.2,373.1 L762.8,373.1 L765.4,373.1 L768.0,373.1 L770.6,369.7 L773.2,369.7 L775.8,366.4 L778.4,366.4 L781.0,366.4 L783.6,363.1 L786.2,363.1 L788.8,359.7 L791.4,359.7 L794.0,359.7 L796.6,356.4 L799.2,356.4 L801.8,356.4 L804.4,353.1 L807.0,356.4 L809.6,356.4 L812.2,359.7 L814.8,359.7 L817.4,359.7 L820.0,359.7 L822.6,359.7 L825.2,359.7 L827.8,359.7 L830.4,359.7 L833.0,359.7 L835.6,359.7 L838.2,359.7 L840.8,363.1 L843.4,366.4 L846.0,369.7 L848.6,373.1 L851.2,373.1 L853.8,376.4 L856.4,379.7 L859.0,379.7 L861.6,383.0 L864.2,386.4 L866.8,386.4 L869.4,389.7 L872.0,396.4 L874.6,406.4 L877.2,406.4 L879.8,406.4 L882.4,406.4 L885.0,406.4 L887.6,406.4 L890.2,406.4 L892.8,406.4 L895.4,406.4 L898.0,406.4 L900.6,406.4 L903.2,406.4 L905.8,406.4 L908.4,406.4 L911.0,406.4 L913.6,406.4 L916.2,406.4 L918.8,406.4 L921.4,406.4 L924.0,406.4 L926.6,406.4 L929.2,406.4 L931.8,406.4 L934.4,406.4 L937.0,406.4 L939.6,406.4 L942.2,406.4 L944.8,406.4 L947.4,406.4 L950.0,396.4 L952.6,389.7 L955.2,389.7 L957.8,389.7 L960.4,389.7 L963.0,386.4 L965.6,386.4 L968.2,386.4 L970.8,386.4 L973.4,386.4 L976.0,383.0 L978.6,383.0 L981.2,379.7 L983.8,379.7 L986.4,376.4 L989.0,373.1 L991.6,373.1 L994.2,369.7" fill="none" stroke="#ff9830" stroke-width="0.9" stroke-linejoin="round"/><path d="M700.4,405.4 L703.0,411.5 L705.6,411.5 L708.2,405.4 L710.8,405.4 L713.4,405.4 L716.0,405.4 L718.6,405.4 L721.2,405.4 L723.8,405.4 L726.4,405.4 L729.0,405.4 L731.6,399.3 L734.2,393.2 L736.8,393.2 L739.4,399.3 L742.0,399.3 L744.6,405.4 L747.2,405.4 L749.8,405.4 L752.4,405.4 L755.0,405.4 L757.6,399.3 L760.2,399.3 L762.8,393.2 L765.4,393.2 L768.0,399.3 L770.6,393.2 L773.2,393.2 L775.8,387.1 L778.4,387.1 L781.0,387.1 L783.6,393.2 L786.2,399.3 L788.8,405.4 L791.4,405.4 L794.0,405.4 L796.6,405.4 L799.2,405.4 L801.8,405.4 L804.4,399.3 L807.0,399.3 L809.6,399.3 L812.2,399.3 L814.8,399.3 L817.4,399.3 L820.0,399.3 L822.6,399.3 L825.2,399.3 L827.8,399.3 L830.4,405.4 L833.0,405.4 L835.6,405.4 L838.2,405.4 L840.8,405.4 L843.4,405.4 L846.0,405.4 L848.6,405.4 L851.2,399.3 L853.8,399.3 L856.4,399.3 L859.0,393.2 L861.6,393.2 L864.2,387.1 L866.8,387.1 L869.4,387.1 L872.0,393.2 L874.6,399.3 L877.2,405.4 L879.8,405.4 L882.4,405.4 L885.0,405.4 L887.6,405.4 L890.2,399.3 L892.8,387.1 L895.4,387.1 L898.0,381.0 L900.6,374.9 L903.2,368.8 L905.8,362.7 L908.4,362.7 L911.0,362.7 L913.6,374.9 L916.2,381.0 L918.8,387.1 L921.4,387.1 L924.0,387.1 L926.6,387.1 L929.2,387.1 L931.8,387.1 L934.4,393.2 L937.0,393.2 L939.6,387.1 L942.2,387.1 L944.8,381.0 L947.4,381.0 L950.0,374.9 L952.6,374.9 L955.2,381.0 L957.8,381.0 L960.4,387.1 L963.0,393.2 L965.6,393.2 L968.2,393.2 L970.8,393.2 L973.4,393.2 L976.0,393.2 L978.6,393.2 L981.2,393.2 L983.8,393.2 L986.4,393.2 L989.0,393.2 L991.6,393.2 L994.2,393.2 L996.8,393.2 L999.4,393.2" fill="none" stroke="#e0b400" stroke-width="0.9" stroke-linejoin="round"/><path d="M700.4,372.9 L705.4,380.7 L712.2,387.5 L719.0,392.5 L723.0,396.6 L725.7,394.2 L729.1,382.4 L734.2,370.6 L739.3,365.5 L742.6,368.2 L747.7,377.3 L752.8,384.1 L759.5,387.5 L766.3,390.9 L769.7,387.5 L776.5,372.3 L781.5,368.9 L786.6,372.3 L793.4,379.0 L800.1,382.4 L810.3,385.1 L817.0,379.0 L823.8,375.6 L830.6,379.0 L837.3,384.1 L847.5,386.5 L854.2,385.8 L859.3,380.7 L867.8,373.9 L872.8,375.6 L877.9,385.8 L884.7,390.9 L891.4,390.9 L898.2,389.2 L905.0,386.8 L911.7,388.5 L925.3,390.2 L938.8,394.2 L949.3,389.2 L955.7,390.9 L962.5,396.6 L972.6,397.6 L981.1,399.3 L987.8,394.2 L994.6,387.5 L999.0,387.5" fill="none" stroke="#73bf69" stroke-width="0.9" stroke-linejoin="round"/><path d="M700.4,423.0 L898.2,422.8 L905.0,421.0 L910.0,422.5 L918.5,417.0 L922.0,422.0 L930.0,421.5 L940.0,422.5 L950.0,421.0 L955.0,422.5 L963.0,420.5 L968.0,422.8 L999.0,422.5" fill="none" stroke="#6f90c4" stroke-width="0.7" stroke-linejoin="round"/></svg>
<div class="t ax" style="right:325.20000000000005px;top:352.4px">20</div>
<div class="t ax" style="right:325.20000000000005px;top:368.9px">15</div>
<div class="t ax" style="right:325.20000000000005px;top:385.5px">10</div>
<div class="t ax" style="right:325.20000000000005px;top:402.0px">5</div>
<div class="t ax" style="right:325.20000000000005px;top:419.0px">0</div>
<div class="t ax" style="left:699.6px;width:30px;text-align:center;top:425.7px">22-09</div>
<div class="t ax" style="left:785.8px;width:30px;text-align:center;top:425.7px">24-09</div>
<div class="t ax" style="left:871.4px;width:30px;text-align:center;top:425.7px">26-09</div>
<div class="t ax" style="left:957.6px;width:30px;text-align:center;top:425.7px">28-09</div>
<div class="t lg2" style="left:695.3px;top:436.4px"><i style="background:#73bf69"></i>Temperatur [°C]</div>
<div class="t lg2" style="left:759.5px;top:436.4px"><i style="background:#fade2a"></i>Windgeschwindigkeit [km/h]</div>
<div class="t lg2" style="left:859.3px;top:436.4px"><i style="background:#8ab8ff"></i>Niederschlag [mm]</div>
<div class="t lg2" style="left:932.7px;top:436.4px"><i style="background:#ff9830"></i>Staub/PM10</div>
<svg style="position:absolute;left:681.5px;top:456.5px" width="17" height="17"><polygon points="0,0 16.5,0 0,16.5" fill="#262a33"/><text x="2.9" y="7.0" font-size="6.5" font-weight="bold" fill="#d8d9e3" font-family="Liberation Sans">i</text></svg>
<div class="ttl" style="left:749.5px;width:200px;top:460.8px">Deutsche Gasspeicher (GIE)</div>
<svg style="position:absolute;left:681px;top:456px" width="337" height="159" viewBox="681 456 337 159"><line x1="707" y1="494.6" x2="969.5" y2="494.6" stroke="#2a2d33" stroke-width="0.7"/><line x1="707" y1="516.5" x2="969.5" y2="516.5" stroke="#2a2d33" stroke-width="0.7"/><line x1="707" y1="538.3" x2="969.5" y2="538.3" stroke="#2a2d33" stroke-width="0.7"/><line x1="707" y1="560.2" x2="969.5" y2="560.2" stroke="#2a2d33" stroke-width="0.7"/><line x1="707" y1="582" x2="969.5" y2="582" stroke="#2a2d33" stroke-width="0.7"/><line x1="712.2" y1="488" x2="712.2" y2="586" stroke="#2a2d33" stroke-width="0.7"/><line x1="742.6" y1="488" x2="742.6" y2="586" stroke="#2a2d33" stroke-width="0.7"/><line x1="775.8" y1="488" x2="775.8" y2="586" stroke="#2a2d33" stroke-width="0.7"/><line x1="807.9" y1="488" x2="807.9" y2="586" stroke="#2a2d33" stroke-width="0.7"/><line x1="841.7" y1="488" x2="841.7" y2="586" stroke="#2a2d33" stroke-width="0.7"/><line x1="874.5" y1="488" x2="874.5" y2="586" stroke="#2a2d33" stroke-width="0.7"/><line x1="907.7" y1="488" x2="907.7" y2="586" stroke="#2a2d33" stroke-width="0.7"/><line x1="941.5" y1="488" x2="941.5" y2="586" stroke="#2a2d33" stroke-width="0.7"/><path d="M708.8,564.3 L722.3,567.7 L735.9,572.4 L749.4,577.8 L756.2,578.5 L766.3,577.8 L776.5,575.1 L790.0,573.4 L803.5,568.4 L817.0,563.3 L830.6,556.5 L844.1,549.8 L857.6,543.0 L871.1,537.9 L884.7,535.2 L898.2,532.9 L908.3,529.5 L915.1,524.4 L923.6,521.0 L926.9,517.6 L928.0,495.7 L929.3,517.6 L938.8,514.3 L952.3,509.2 L968.5,504.8" fill="none" stroke="#73bf69" stroke-width="0.9" stroke-linejoin="round"/><path d="M708.8,580.0 L710.5,581.6 L712.2,584.0 L713.9,581.3 L715.6,580.2 L717.3,582.2 L719.0,582.6 L720.6,581.1 L722.3,578.9 L724.0,575.2 L725.7,568.8 L727.4,573.3 L729.1,576.5 L730.8,580.8 L732.5,582.5 L734.2,577.9 L735.9,578.3 L737.6,581.7 L739.3,584.1 L741.0,581.4 L742.6,577.4 L744.3,575.2 L746.0,575.2 L747.7,572.0 L750.1,575.8 L752.8,536.4 L755.5,563.5 L757.9,549.7 L759.5,558.9 L761.2,569.5 L763.6,546.5 L765.1,550.8 L766.5,554.3 L768.0,558.7 L769.7,544.6 L771.4,530.5 L773.1,542.9 L774.8,553.1 L776.5,562.7 L778.5,564.8 L780.5,566.1 L783.2,543.8 L785.2,545.7 L787.3,546.7 L788.8,542.2 L790.2,534.2 L791.7,528.9 L793.4,535.3 L795.0,545.1 L796.7,552.6 L798.8,538.9 L800.8,528.6 L802.3,540.4 L803.7,548.5 L805.2,559.7 L806.9,541.8 L808.6,524.7 L810.3,532.4 L812.0,538.8 L813.7,532.1 L815.3,526.4 L817.0,522.2 L819.0,530.9 L821.1,537.0 L823.8,509.7 L825.5,521.9 L827.2,533.2 L828.9,516.2 L830.6,501.7 L832.2,514.9 L833.9,531.4 L835.6,526.8 L837.3,521.7 L839.3,537.0 L841.4,548.6 L844.1,524.9 L845.8,506.3 L847.5,524.1 L849.2,540.4 L850.7,529.3 L852.1,520.3 L853.6,508.5 L855.6,524.6 L857.6,544.2 L859.3,543.8 L861.0,546.1 L862.7,549.2 L864.4,547.4 L866.1,544.6 L867.8,546.3 L869.5,548.8 L871.1,554.0 L872.8,549.5 L874.5,541.9 L876.2,535.5 L877.7,537.0 L879.1,539.1 L880.5,542.8 L882.0,543.9 L883.5,547.1 L885.0,548.5 L886.6,550.9 L888.1,554.6 L889.8,549.1 L891.4,545.5 L893.1,542.5 L894.8,536.9 L896.5,533.5 L898.2,532.5 L899.9,539.0 L901.6,543.9 L903.1,539.5 L904.7,537.0 L906.2,533.4 L907.7,526.8 L909.7,519.9 L911.7,510.4 L913.4,515.7 L915.1,521.3 L916.8,526.5 L918.5,519.0 L920.2,514.6 L921.9,505.0 L923.6,517.5 L925.3,527.0 L927.3,523.7 L929.3,517.9 L930.8,523.1 L932.2,529.0 L933.7,536.9 L935.4,530.9 L937.1,527.5 L938.8,524.6 L940.5,534.8 L942.2,543.4 L943.9,533.0 L945.5,525.7 L947.2,534.2 L948.9,544.3 L950.6,555.8 L952.3,548.7 L954.0,539.9 L955.7,552.1 L957.4,564.6 L959.1,556.8 L960.8,546.9 L962.5,558.7 L964.2,571.4 L965.9,561.5 L967.5,550.3 L969.2,566.7" fill="none" stroke="#e0b400" stroke-width="0.9" stroke-linejoin="round"/></svg>
<div class="t ax" style="right:316.1px;top:490.6px">100 %</div>
<div class="t ax" style="right:316.1px;top:513.0px">80 %</div>
<div class="t ax" style="right:316.1px;top:534.6px">60 %</div>
<div class="t ax" style="right:316.1px;top:556.2px">40 %</div>
<div class="t ax" style="right:316.1px;top:577.9px">20 %</div>
<div class="t ax" style="left:976px;top:487.3px">2000 GWh/d</div>
<div class="t ax" style="left:976px;top:510.3px">1500 GWh/d</div>
<div class="t ax" style="left:976px;top:534.6px">1000 GWh/d</div>
<div class="t ax" style="left:976px;top:558.3px">500 GWh/d</div>
<div class="t ax" style="left:976px;top:582.3px">0 GWh/d</div>
<div class="t ax" style="left:697.2px;width:30px;text-align:center;top:589.7px">01-02</div>
<div class="t ax" style="left:727.6px;width:30px;text-align:center;top:589.7px">01-03</div>
<div class="t ax" style="left:760.8px;width:30px;text-align:center;top:589.7px">01-04</div>
<div class="t ax" style="left:792.9px;width:30px;text-align:center;top:589.7px">01-05</div>
<div class="t ax" style="left:826.7px;width:30px;text-align:center;top:589.7px">01-06</div>
<div class="t ax" style="left:859.5px;width:30px;text-align:center;top:589.7px">01-07</div>
<div class="t ax" style="left:892.7px;width:30px;text-align:center;top:589.7px">01-08</div>
<div class="t ax" style="left:926.5px;width:30px;text-align:center;top:589.7px">01-09</div>
<div class="t lg2" style="left:695.3px;top:601.1px"><i style="background:#73bf69"></i>Füllstand deutsche Gasspeicher</div>
<div class="t lg2" style="left:960.8px;top:601.1px"><i style="background:#fade2a"></i>Einspeisung</div>
<div id="bar"></div>
</body></html>
